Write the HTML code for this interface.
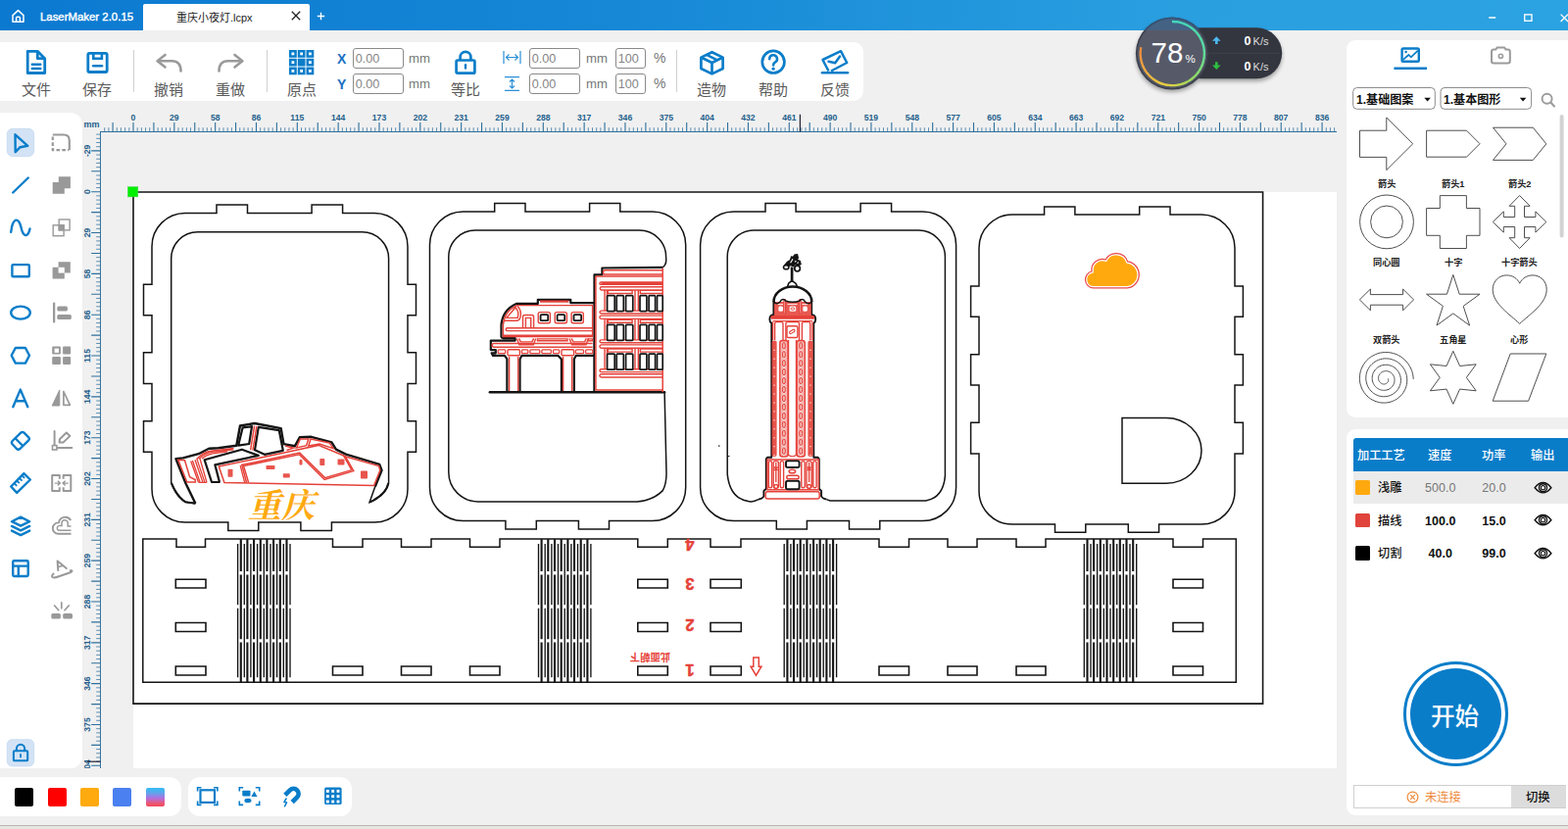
<!DOCTYPE html>
<html lang="zh"><head><meta charset="utf-8"><title>LaserMaker 2.0.15</title>
<style>
*{box-sizing:border-box;margin:0;padding:0}
html,body{width:1600px;height:846px;overflow:hidden}
body{position:relative;background:#f0f0f0;font-family:"Liberation Sans",sans-serif;font-size:12px;color:#333}
.a,.t{position:absolute}
svg{display:block;overflow:visible}
.t{pointer-events:none}
.t text,text.cj{font-family:"Liberation Sans","Noto Sans CJK SC",sans-serif}
#titlebar{left:0;top:0;width:1600px;height:31px;background:linear-gradient(90deg,#0b79d0 0%,#1688d6 40%,#2a9fe0 75%,#2ba2e1 100%)}
#tab{left:146px;top:4px;width:170px;height:27px;background:#fff;border-radius:2px 2px 0 0}
#toolbar{left:0;top:43px;width:881px;height:59.6px;background:#fff;border-radius:0 10px 10px 0}
.sep{width:1px;background:#d0d0d0;top:8px;height:43px}
.inp{border:1px solid #8a8a8a;border-radius:3px;background:#fff;color:#858585;font-size:12.6px;line-height:20.5px;padding-left:1.8px;height:21px}
.unit{color:#767676;font-size:13.2px;line-height:14px}
#left{left:0;top:115px;width:84px;height:669px;background:#fff;border-radius:0 12px 12px 0}
#canvas{left:103px;top:135px;width:1261px;height:649px;background:#f0f0f0;overflow:hidden}
#work{left:33px;top:61px;width:1228px;height:588px;background:#fff}
#rp1{left:1374px;top:41px;width:226px;height:385px;background:#fff;border-radius:9px 0 0 9px}
#rp2{left:1374px;top:438px;width:226px;height:394.3px;background:#fff;border-radius:9px 0 0 9px}
#colors{left:0;top:793px;width:185px;height:40px;background:#fff;border-radius:0 12px 12px 0}
#btools{left:192px;top:793px;width:167px;height:40px;background:#fff;border-radius:12px}
.sw{top:11px;width:19px;height:19px;border-radius:2px}
#taskstrip{left:0;top:842.4px;width:1600px;height:4px;background:#e7e5df;border-top:1.6px solid #b9b6b1}
.num{font-size:12.5px;line-height:15px;text-align:center;padding-top:1px}

</style></head>
<body>
<div id="titlebar" class="a"><svg class="a" style="left:11px;top:9px" width="15" height="15" viewBox="0 0 15 15" ><path d="M2 6.6 L7.5 1.6 L13 6.6 V13.2 H2 Z M5.6 13 V9.2 Q5.6 8.2 6.6 8.2 H8.4 Q9.4 8.2 9.4 9.2 V13" fill="none" stroke="#fff" stroke-width="1.5" stroke-linejoin="round"/></svg><div class="a" style="left:41px;top:10px;font-size:11.3px;font-weight:normal;-webkit-text-stroke:0.4px #fff;color:#fff;letter-spacing:0.05px;line-height:14px;white-space:nowrap">LaserMaker 2.0.15</div><div id="tab" class="a"><svg class="t" role="img" aria-label="重庆小夜灯.lcpx" style="left:34.00px;top:7.00px" width="80.09" height="14.30" ><title>重庆小夜灯.lcpx</title><text x="0" y="11" font-size="11" fill="#222">重庆小夜灯.lcpx</text></svg><svg class="a" style="left:151px;top:6.6px" width="10" height="10" viewBox="0 0 10 10" ><path d="M0.8 0.8 L9.2 9.2 M9.2 0.8 L0.8 9.2" stroke="#222" stroke-width="1.3" fill="none"/></svg></div><svg class="a" style="left:323px;top:11.8px" width="9" height="9" viewBox="0 0 9 9" ><path d="M4.5 0.8 V8.2 M0.8 4.5 H8.2" stroke="#fff" stroke-width="1.3" fill="none"/></svg><svg class="a" style="left:1518px;top:16px" width="10" height="4" viewBox="0 0 10 4" ><path d="M1.2 2 H8.2" stroke="#d4ecf9" stroke-width="1.9"/></svg><svg class="a" style="left:1554px;top:13px" width="11" height="10" viewBox="0 0 11 10" ><rect x="1.7" y="1.9" width="7.3" height="6.4" fill="none" stroke="#f4fbff" stroke-width="1.4"/></svg><svg class="a" style="left:1590px;top:12px" width="12" height="12" viewBox="0 0 12 12" ><path d="M2.6 2.6 L10 10 M10 2.6 L2.6 10" stroke="#fff" stroke-width="1.3" fill="none"/></svg></div>
<div id="toolbar" class="a"><svg class="a" style="left:25px;top:6px" width="24" height="29" viewBox="0 0 24 29" ><path d="M3.2 3.3 H13.3 L20.7 10.7 V25.5 H3.2 Z" fill="none" stroke="#0a7dc9" stroke-width="2.8" stroke-linejoin="round"/><path d="M13.3 3.3 V10.7 H20.7" fill="none" stroke="#0a7dc9" stroke-width="2.8" stroke-linejoin="round"/><path d="M7.8 16.8 H16.3 M7.8 20.9 H16.3" stroke="#0a7dc9" stroke-width="2.5" stroke-linecap="round"/></svg><svg class="t" role="img" aria-label="文件" style="left:21.80px;top:39.00px" width="31.00" height="19.50" ><title>文件</title><text x="0" y="15" font-size="15" fill="#5a5a5a">文件</text></svg><svg class="a" style="left:87px;top:8px" width="25" height="25" viewBox="0 0 25 25" ><rect x="2.8" y="3.3" width="19.4" height="19.2" rx="1.5" fill="none" stroke="#0a7dc9" stroke-width="2.8"/><path d="M8.3 3.3 V8.7 H16.9 V3.3" fill="none" stroke="#0a7dc9" stroke-width="2.6"/><path d="M8.2 16.3 H17" stroke="#0a7dc9" stroke-width="2.6" stroke-linecap="round"/></svg><svg class="t" role="img" aria-label="保存" style="left:84.30px;top:39.00px" width="31.00" height="19.50" ><title>保存</title><text x="0" y="15" font-size="15" fill="#5a5a5a">保存</text></svg><div class="a sep" style="left:136px"></div><svg class="a" style="left:158px;top:10px" width="30" height="23" viewBox="0 0 30 23" ><path d="M10.5 3 L2.6 9.2 L10.5 15.5" fill="none" stroke="#9a9a9a" stroke-width="2.6" stroke-linecap="round" stroke-linejoin="round"/><path d="M3.2 9.2 H17.5 Q26.5 9.2 26.5 19.5" fill="none" stroke="#9a9a9a" stroke-width="2.6" stroke-linecap="round"/></svg><svg class="t" role="img" aria-label="撤销" style="left:157.20px;top:39.00px" width="31.00" height="19.50" ><title>撤销</title><text x="0" y="15" font-size="15" fill="#5a5a5a">撤销</text></svg><svg class="a" style="left:219.5px;top:10px" width="30" height="23" viewBox="0 0 30 23" ><path d="M19.5 3 L27.4 9.2 L19.5 15.5" fill="none" stroke="#9a9a9a" stroke-width="2.6" stroke-linecap="round" stroke-linejoin="round"/><path d="M26.8 9.2 H12.5 Q3.5 9.2 3.5 19.5" fill="none" stroke="#9a9a9a" stroke-width="2.6" stroke-linecap="round"/></svg><svg class="t" role="img" aria-label="重做" style="left:220.00px;top:39.00px" width="31.00" height="19.50" ><title>重做</title><text x="0" y="15" font-size="15" fill="#5a5a5a">重做</text></svg><div class="a sep" style="left:272px"></div><svg class="a" style="left:295px;top:8px" width="26" height="26" viewBox="0 0 26 26" ><rect x="0.00" y="0.00" width="7.8" height="7.8" fill="#0a7dc9"/><rect x="2.50" y="2.50" width="2.8" height="2.8" fill="#fff"/><rect x="8.75" y="0.00" width="7.8" height="7.8" fill="#0a7dc9"/><rect x="11.25" y="2.50" width="2.8" height="2.8" fill="#fff"/><rect x="17.50" y="0.00" width="7.8" height="7.8" fill="#0a7dc9"/><rect x="20.00" y="2.50" width="2.8" height="2.8" fill="#fff"/><rect x="0.00" y="8.75" width="7.8" height="7.8" fill="#0a7dc9"/><rect x="2.50" y="11.25" width="2.8" height="2.8" fill="#fff"/><rect x="8.75" y="8.75" width="7.8" height="7.8" fill="#0a7dc9"/><rect x="17.50" y="8.75" width="7.8" height="7.8" fill="#0a7dc9"/><rect x="20.00" y="11.25" width="2.8" height="2.8" fill="#fff"/><rect x="0.00" y="17.50" width="7.8" height="7.8" fill="#0a7dc9"/><rect x="2.50" y="20.00" width="2.8" height="2.8" fill="#fff"/><rect x="8.75" y="17.50" width="7.8" height="7.8" fill="#0a7dc9"/><rect x="11.25" y="20.00" width="2.8" height="2.8" fill="#fff"/><rect x="17.50" y="17.50" width="7.8" height="7.8" fill="#0a7dc9"/><rect x="20.00" y="20.00" width="2.8" height="2.8" fill="#fff"/></svg><svg class="t" role="img" aria-label="原点" style="left:292.50px;top:39.00px" width="31.00" height="19.50" ><title>原点</title><text x="0" y="15" font-size="15" fill="#5a5a5a">原点</text></svg><div class="a" style="left:344px;top:10px;font-size:14px;font-weight:bold;color:#1a6fc4;line-height:14px">X</div><div class="a" style="left:344px;top:36px;font-size:14px;font-weight:bold;color:#1a6fc4;line-height:14px">Y</div><div class="a inp" style="left:360px;top:6px;width:52px">0.00</div><div class="a unit" style="left:417px;top:9.5px">mm</div><div class="a inp" style="left:360px;top:32px;width:52px">0.00</div><div class="a unit" style="left:417px;top:35.5px">mm</div><svg class="a" style="left:463px;top:8px" width="24" height="26" viewBox="0 0 24 26" ><rect x="2.6" y="10.5" width="18.8" height="13.2" rx="1.2" fill="none" stroke="#0a7dc9" stroke-width="2.7"/><path d="M6.6 10.5 V7.2 A5.4 5.4 0 0 1 17.4 7.2 V10.5" fill="none" stroke="#0a7dc9" stroke-width="2.7"/><path d="M12 15.3 V18.6" stroke="#0a7dc9" stroke-width="2.4" stroke-linecap="round"/></svg><svg class="t" role="img" aria-label="等比" style="left:460.00px;top:39.00px" width="31.00" height="19.50" ><title>等比</title><text x="0" y="15" font-size="15" fill="#5a5a5a">等比</text></svg><svg class="a" style="left:512.5px;top:9px" width="19" height="13" viewBox="0 0 19 13" ><path d="M1 0 V13 M18 0 V13 M3.5 6.5 H15.5 M6.5 3.5 L3.5 6.5 L6.5 9.5 M12.5 3.5 L15.5 6.5 L12.5 9.5" fill="none" stroke="#2a8fd6" stroke-width="1.2"/></svg><svg class="a" style="left:514.5px;top:35px" width="15" height="15" viewBox="0 0 15 15" ><path d="M0 0.7 H15 M0 14.3 H15 M7.5 3 V12 M5 5.5 L7.5 3 L10 5.5 M5 9.5 L7.5 12 L10 9.5" fill="none" stroke="#2a8fd6" stroke-width="1.2"/></svg><div class="a inp" style="left:540px;top:5.5px;width:52px">0.00</div><div class="a unit" style="left:598px;top:9.5px">mm</div><div class="a inp" style="left:540px;top:32px;width:52px">0.00</div><div class="a unit" style="left:598px;top:35.5px">mm</div><div class="a inp" style="left:628px;top:5.5px;width:31px">100</div><div class="a unit" style="left:667px;top:9px"><span style="font-size:14px">%</span></div><div class="a inp" style="left:628px;top:32px;width:31px">100</div><div class="a unit" style="left:667px;top:35px"><span style="font-size:14px">%</span></div><div class="a sep" style="left:690px"></div><svg class="a" style="left:712px;top:7px" width="29" height="28" viewBox="0 0 29 28" ><path d="M14.5 3.2 L25.6 8.6 V20 L14.5 25.4 L3.4 20 V8.6 Z" fill="none" stroke="#0a7dc9" stroke-width="2.7" stroke-linejoin="round"/><path d="M3.8 8.8 L14.5 14 L25.2 8.8 M14.5 14 V25" fill="none" stroke="#0a7dc9" stroke-width="2.7" stroke-linejoin="round"/><path d="M9 5.9 L20 11.3" fill="none" stroke="#0a7dc9" stroke-width="2.4"/></svg><svg class="t" role="img" aria-label="造物" style="left:711.00px;top:39.00px" width="31.00" height="19.50" ><title>造物</title><text x="0" y="15" font-size="15" fill="#5a5a5a">造物</text></svg><svg class="a" style="left:775px;top:6px" width="28" height="28" viewBox="0 0 28 28" ><circle cx="14.1" cy="14.2" r="11.3" fill="none" stroke="#0a7dc9" stroke-width="2.7"/><path d="M10.2 11.2 A3.9 3.9 0 1 1 15.8 14.6 Q14.1 15.6 14.1 17.6" fill="none" stroke="#0a7dc9" stroke-width="2.5" stroke-linecap="round"/><circle cx="14.1" cy="21.2" r="1.6" fill="#0a7dc9"/></svg><svg class="t" role="img" aria-label="帮助" style="left:773.80px;top:39.00px" width="31.00" height="19.50" ><title>帮助</title><text x="0" y="15" font-size="15" fill="#5a5a5a">帮助</text></svg><svg class="a" style="left:836px;top:6px" width="32" height="28" viewBox="0 0 32 28" ><path d="M9.5 23.5 L3.5 12 L22 3.2 L28.2 15 L12 23.5" fill="none" stroke="#0a7dc9" stroke-width="2.5" stroke-linejoin="round"/><path d="M9.5 13.8 L16.2 15.2 L21 8.5" fill="none" stroke="#0a7dc9" stroke-width="2.5" stroke-linecap="round" stroke-linejoin="round"/><path d="M3 25.3 H29" stroke="#0a7dc9" stroke-width="2.6" stroke-linecap="round"/></svg><svg class="t" role="img" aria-label="反馈" style="left:836.80px;top:39.00px" width="31.00" height="19.50" ><title>反馈</title><text x="0" y="15" font-size="15" fill="#5a5a5a">反馈</text></svg></div>
<div id="left" class="a"><svg class="a" style="left:0;top:0" width="84" height="669" viewBox="0 115 84 669"><rect x="7.3" y="131.3" width="27.3" height="28.2" rx="5.5" fill="#d3e3f5" stroke="#c3d8f0" stroke-width="0.8"/><path d="M15.5 137.3 L28.3 148.8 L20.6 150.2 L15.7 155.2 Z" fill="none" stroke="#0a7dc9" stroke-width="2.4" stroke-linecap="round" stroke-linejoin="round"/><path d="M53.8 137.5 H65 Q70.8 137.5 70.8 143.5 V153.2" fill="none" stroke="#999" stroke-width="2.2"/><path d="M53.8 139.5 V153.2 H70" fill="none" stroke="#999" stroke-width="2.2" stroke-dasharray="3.6 2.2"/><path d="M13.2 196.5 L28.8 181.5" fill="none" stroke="#0a7dc9" stroke-width="2.4" stroke-linecap="round" stroke-linejoin="round"/><path d="M59.8 180.2 H71.9 V192.2 H65.8 V197.8 H53.7 V186 H59.8 Z" fill="#999"/><path d="M11.2 236.8 C13 222 19 221 21.5 232 C23.5 241.5 28.5 243.5 30.5 233.5" fill="none" stroke="#0a7dc9" stroke-width="2.4" stroke-linecap="round" stroke-linejoin="round"/><rect x="60.2" y="224" width="10.9" height="10.9" fill="none" stroke="#999" stroke-width="1.4"/><rect x="54.2" y="229.8" width="10.9" height="10.9" fill="none" stroke="#999" stroke-width="1.4"/><rect x="59.6" y="229.2" width="6.2" height="6.3" fill="#999"/><rect x="12.4" y="270.1" width="17.4" height="12.2" rx="0.8" fill="none" stroke="#0a7dc9" stroke-width="2.4" stroke-linecap="round" stroke-linejoin="round"/><path d="M59.6 267.2 H71.8 V278.6 H65.8 V284.5 H53.6 V272.8 H59.6 Z" fill="#999"/><rect x="59.6" y="272.8" width="6.2" height="5.8" fill="#fff"/><ellipse cx="21" cy="319.1" rx="9.8" ry="6.5" fill="none" stroke="#0a7dc9" stroke-width="2.4" stroke-linecap="round" stroke-linejoin="round"/><rect x="54" y="308.4" width="2.3" height="21.2" rx="1" fill="#999"/><rect x="58.3" y="312.5" width="10.6" height="5" rx="1.5" fill="#999"/><rect x="58.3" y="321.1" width="14.5" height="5" rx="1.5" fill="#999"/><path d="M15.8 355 H25.9 L30 362.8 L25.9 370.6 H15.8 L11.7 362.8 Z" fill="none" stroke="#0a7dc9" stroke-width="2.4" stroke-linecap="round" stroke-linejoin="round"/><rect x="53.2" y="353.5" width="8.7" height="8.1" rx="1" fill="#999"/><rect x="64.1" y="353.5" width="8" height="8.1" rx="1" fill="#999"/><rect x="53.2" y="363.9" width="8.7" height="8" rx="1" fill="#999"/><rect x="64.1" y="363.9" width="8" height="8" rx="1" fill="#999"/><rect x="55.6" y="355.6" width="4.4" height="4.3" fill="#fff"/><path d="M13.3 415.2 L20.8 397.6 L28.3 415.2 M16.2 409.3 H25.4" fill="none" stroke="#0a7dc9" stroke-width="2.4" stroke-linecap="round" stroke-linejoin="round"/><path d="M60.8 397.9 V414 H53.2 Z" fill="#999" stroke="#999" stroke-width="1" stroke-linejoin="round"/><path d="M64.9 399.5 V413.3 H71.4 Z" fill="none" stroke="#999" stroke-width="1.7" stroke-linejoin="round"/><path d="M21.2 441.7 Q22.9 440.1 24.6 441.7 L29.2 446.3 Q30.6 447.8 29.2 449.3 L20.4 458 Q18.7 459.5 17 458 L12.6 453.3 Q11.2 451.5 12.6 450 Z M15.8 447.5 L23.3 455" fill="none" stroke="#0a7dc9" stroke-width="2.4" stroke-linecap="round" stroke-linejoin="round"/><path d="M55.6 440 V454 M58.6 456.9 H73.3" fill="none" stroke="#999" stroke-width="2" stroke-linecap="round" stroke-linejoin="round"/><rect x="53.5" y="454.6" width="4.4" height="4.4" fill="#fff" stroke="#999" stroke-width="1.6"/><path d="M60.6 451.6 L60.9 448.2 L67.8 441.5 L71.4 444.9 L64.4 451.6 Z" fill="none" stroke="#999" stroke-width="2" stroke-linecap="round" stroke-linejoin="round"/><path d="M24.4 483.2 L30.9 489.5 L17.2 502.8 L11.2 496.5 Z" fill="none" stroke="#0a7dc9" stroke-width="2.4" stroke-linecap="round" stroke-linejoin="round"/><path d="M14.5 493.2 l2.7 2.7 M17.1 490.5 l2.7 2.7 M19.8 487.9 l2.7 2.7 M22.4 485.2 l2.7 2.7" fill="none" stroke="#0a7dc9" stroke-width="1.9"/><path d="M60.8 488.8 V485.1 H53.2 V501 H60.8 V497.3 M64.7 488.8 V485.1 H72.3 V501 H64.7 V497.3" fill="none" stroke="#999" stroke-width="2" stroke-linejoin="round"/><path d="M55.8 493.1 H61 M58.9 490.7 L61.4 493.1 L58.9 495.6 M69.7 493.1 H64.5 M66.6 490.7 L64.1 493.1 L66.6 495.6" fill="none" stroke="#999" stroke-width="1.4" stroke-linejoin="round"/><path d="M21.1 527.6 L30.2 532.2 L21.1 536.6 L12 532.2 Z M12 536.9 L21.1 541.4 L30.2 536.9 M12 541.6 L21.1 546.1 L30.2 541.6" fill="none" stroke="#0a7dc9" stroke-width="2.4" stroke-linecap="round" stroke-linejoin="round"/><path d="M72.5 544.8 H59.5 A5.7 5.7 0 0 1 59.5 533.4 H60 A6.6 6.6 0 0 1 72.2 531" fill="none" stroke="#999" stroke-width="1.9"/><path d="M72.5 541.2 H60 A2.4 2.4 0 0 1 60 536.6 H63 V533.5 A3.2 3.2 0 0 1 69.2 533 V537 H72.5" fill="none" stroke="#999" stroke-width="1.5"/><rect x="13.2" y="572.3" width="15.5" height="15.7" rx="1.2" fill="none" stroke="#0a7dc9" stroke-width="2.4" stroke-linecap="round" stroke-linejoin="round"/><path d="M13.2 577.6 H28.7 M18.8 577.6 V588" fill="none" stroke="#0a7dc9" stroke-width="2.4" stroke-linecap="round" stroke-linejoin="round"/><path d="M59.3 582 L58.6 572.5 L67.8 580" fill="none" stroke="#999" stroke-width="2" stroke-linecap="round" stroke-linejoin="round"/><path d="M58.9 578.8 L64.3 577.3" fill="none" stroke="#999" stroke-width="1.6"/><path d="M54.6 585.6 Q51.5 588.5 54.5 589.4 Q56 589.8 60 588.3 L72.3 584 Q75 581.8 71.8 582.2" fill="none" stroke="#999" stroke-width="2" stroke-linecap="round" stroke-linejoin="round"/><rect x="52.3" y="625.9" width="9.6" height="5.6" rx="1.6" fill="#999"/><rect x="64.2" y="625.9" width="9.8" height="5.6" rx="1.6" fill="#999"/><path d="M62.8 614.9 V620.7 M55.6 618 L59.8 622.7 M70.2 618 L66 622.7" fill="none" stroke="#999" stroke-width="1.7" stroke-linecap="round"/><rect x="7.3" y="754.7" width="27.3" height="27.2" rx="5" fill="#d3e3f5" stroke="#c3d8f0" stroke-width="0.8"/><g transform="translate(11.9 758.3) scale(0.76)"><rect x="2.6" y="10.5" width="18.8" height="13.2" rx="1.2" fill="none" stroke="#0a7dc9" stroke-width="2.7"/><path d="M6.6 10.5 V7.2 A5.4 5.4 0 0 1 17.4 7.2 V10.5" fill="none" stroke="#0a7dc9" stroke-width="2.7"/><path d="M12 15.3 V18.6" stroke="#0a7dc9" stroke-width="2.4" stroke-linecap="round"/></g></svg></div>
<svg id="rulers" class="a" style="left:84px;top:110px" width="1281" height="675" viewBox="84 110 1281 675"><clipPath id="rclip"><rect x="84" y="110" width="1281" height="674"/></clipPath><g clip-path="url(#rclip)"><path d="M106.72 130.2V134.5M110.90 130.2V134.5M119.27 130.2V134.5M123.45 130.2V134.5M127.63 130.2V134.5M131.82 130.2V134.5M140.18 130.2V134.5M144.37 130.2V134.5M148.55 130.2V134.5M152.73 130.2V134.5M161.10 130.2V134.5M165.28 130.2V134.5M169.46 130.2V134.5M173.65 130.2V134.5M182.01 130.2V134.5M186.20 130.2V134.5M190.38 130.2V134.5M194.56 130.2V134.5M202.93 130.2V134.5M207.11 130.2V134.5M211.29 130.2V134.5M215.48 130.2V134.5M223.84 130.2V134.5M228.03 130.2V134.5M232.21 130.2V134.5M236.39 130.2V134.5M244.76 130.2V134.5M248.94 130.2V134.5M253.12 130.2V134.5M257.31 130.2V134.5M265.67 130.2V134.5M269.86 130.2V134.5M274.04 130.2V134.5M278.22 130.2V134.5M286.59 130.2V134.5M290.77 130.2V134.5M294.95 130.2V134.5M299.14 130.2V134.5M307.50 130.2V134.5M311.69 130.2V134.5M315.87 130.2V134.5M320.05 130.2V134.5M328.42 130.2V134.5M332.60 130.2V134.5M336.78 130.2V134.5M340.97 130.2V134.5M349.33 130.2V134.5M353.52 130.2V134.5M357.70 130.2V134.5M361.88 130.2V134.5M370.25 130.2V134.5M374.43 130.2V134.5M378.61 130.2V134.5M382.80 130.2V134.5M391.16 130.2V134.5M395.35 130.2V134.5M399.53 130.2V134.5M403.71 130.2V134.5M412.08 130.2V134.5M416.26 130.2V134.5M420.44 130.2V134.5M424.63 130.2V134.5M432.99 130.2V134.5M437.18 130.2V134.5M441.36 130.2V134.5M445.54 130.2V134.5M453.91 130.2V134.5M458.09 130.2V134.5M462.27 130.2V134.5M466.46 130.2V134.5M474.82 130.2V134.5M479.01 130.2V134.5M483.19 130.2V134.5M487.37 130.2V134.5M495.74 130.2V134.5M499.92 130.2V134.5M504.10 130.2V134.5M508.29 130.2V134.5M516.65 130.2V134.5M520.84 130.2V134.5M525.02 130.2V134.5M529.20 130.2V134.5M537.57 130.2V134.5M541.75 130.2V134.5M545.93 130.2V134.5M550.12 130.2V134.5M558.48 130.2V134.5M562.67 130.2V134.5M566.85 130.2V134.5M571.03 130.2V134.5M579.40 130.2V134.5M583.58 130.2V134.5M587.76 130.2V134.5M591.95 130.2V134.5M600.31 130.2V134.5M604.50 130.2V134.5M608.68 130.2V134.5M612.86 130.2V134.5M621.23 130.2V134.5M625.41 130.2V134.5M629.59 130.2V134.5M633.78 130.2V134.5M642.14 130.2V134.5M646.33 130.2V134.5M650.51 130.2V134.5M654.69 130.2V134.5M663.06 130.2V134.5M667.24 130.2V134.5M671.42 130.2V134.5M675.61 130.2V134.5M683.97 130.2V134.5M688.16 130.2V134.5M692.34 130.2V134.5M696.52 130.2V134.5M704.89 130.2V134.5M709.07 130.2V134.5M713.25 130.2V134.5M717.44 130.2V134.5M725.80 130.2V134.5M729.99 130.2V134.5M734.17 130.2V134.5M738.35 130.2V134.5M746.72 130.2V134.5M750.90 130.2V134.5M755.08 130.2V134.5M759.27 130.2V134.5M767.63 130.2V134.5M771.82 130.2V134.5M776.00 130.2V134.5M780.18 130.2V134.5M788.55 130.2V134.5M792.73 130.2V134.5M796.91 130.2V134.5M801.10 130.2V134.5M809.46 130.2V134.5M813.65 130.2V134.5M817.83 130.2V134.5M822.01 130.2V134.5M830.38 130.2V134.5M834.56 130.2V134.5M838.74 130.2V134.5M842.93 130.2V134.5M851.29 130.2V134.5M855.48 130.2V134.5M859.66 130.2V134.5M863.84 130.2V134.5M872.21 130.2V134.5M876.39 130.2V134.5M880.57 130.2V134.5M884.76 130.2V134.5M893.12 130.2V134.5M897.31 130.2V134.5M901.49 130.2V134.5M905.67 130.2V134.5M914.04 130.2V134.5M918.22 130.2V134.5M922.40 130.2V134.5M926.59 130.2V134.5M934.95 130.2V134.5M939.14 130.2V134.5M943.32 130.2V134.5M947.50 130.2V134.5M955.87 130.2V134.5M960.05 130.2V134.5M964.23 130.2V134.5M968.42 130.2V134.5M976.78 130.2V134.5M980.97 130.2V134.5M985.15 130.2V134.5M989.33 130.2V134.5M997.70 130.2V134.5M1001.88 130.2V134.5M1006.06 130.2V134.5M1010.25 130.2V134.5M1018.61 130.2V134.5M1022.80 130.2V134.5M1026.98 130.2V134.5M1031.16 130.2V134.5M1039.53 130.2V134.5M1043.71 130.2V134.5M1047.89 130.2V134.5M1052.08 130.2V134.5M1060.44 130.2V134.5M1064.63 130.2V134.5M1068.81 130.2V134.5M1072.99 130.2V134.5M1081.36 130.2V134.5M1085.54 130.2V134.5M1089.72 130.2V134.5M1093.91 130.2V134.5M1102.27 130.2V134.5M1106.46 130.2V134.5M1110.64 130.2V134.5M1114.82 130.2V134.5M1123.19 130.2V134.5M1127.37 130.2V134.5M1131.55 130.2V134.5M1135.74 130.2V134.5M1144.10 130.2V134.5M1148.29 130.2V134.5M1152.47 130.2V134.5M1156.65 130.2V134.5M1165.02 130.2V134.5M1169.20 130.2V134.5M1173.38 130.2V134.5M1177.57 130.2V134.5M1185.93 130.2V134.5M1190.12 130.2V134.5M1194.30 130.2V134.5M1198.48 130.2V134.5M1206.85 130.2V134.5M1211.03 130.2V134.5M1215.21 130.2V134.5M1219.40 130.2V134.5M1227.76 130.2V134.5M1231.95 130.2V134.5M1236.13 130.2V134.5M1240.31 130.2V134.5M1248.68 130.2V134.5M1252.86 130.2V134.5M1257.04 130.2V134.5M1261.23 130.2V134.5M1269.59 130.2V134.5M1273.78 130.2V134.5M1277.96 130.2V134.5M1282.14 130.2V134.5M1290.51 130.2V134.5M1294.69 130.2V134.5M1298.87 130.2V134.5M1303.06 130.2V134.5M1311.42 130.2V134.5M1315.61 130.2V134.5M1319.79 130.2V134.5M1323.97 130.2V134.5M1332.34 130.2V134.5M1336.52 130.2V134.5M1340.70 130.2V134.5M1344.89 130.2V134.5M1353.25 130.2V134.5M1357.44 130.2V134.5M1361.62 130.2V134.5" stroke="#2d6f9c" stroke-width="1" fill="none" opacity="0.75"/><path d="M115.09 125V134.5M136.00 125V134.5M156.91 125V134.5M177.83 125V134.5M198.75 125V134.5M219.66 125V134.5M240.57 125V134.5M261.49 125V134.5M282.40 125V134.5M303.32 125V134.5M324.24 125V134.5M345.15 125V134.5M366.06 125V134.5M386.98 125V134.5M407.89 125V134.5M428.81 125V134.5M449.73 125V134.5M470.64 125V134.5M491.55 125V134.5M512.47 125V134.5M533.38 125V134.5M554.30 125V134.5M575.21 125V134.5M596.13 125V134.5M617.04 125V134.5M637.96 125V134.5M658.88 125V134.5M679.79 125V134.5M700.71 125V134.5M721.62 125V134.5M742.53 125V134.5M763.45 125V134.5M784.37 125V134.5M805.28 125V134.5M826.19 125V134.5M847.11 125V134.5M868.02 125V134.5M888.94 125V134.5M909.85 125V134.5M930.77 125V134.5M951.68 125V134.5M972.60 125V134.5M993.51 125V134.5M1014.43 125V134.5M1035.34 125V134.5M1056.26 125V134.5M1077.17 125V134.5M1098.09 125V134.5M1119.00 125V134.5M1139.92 125V134.5M1160.84 125V134.5M1181.75 125V134.5M1202.66 125V134.5M1223.58 125V134.5M1244.49 125V134.5M1265.41 125V134.5M1286.33 125V134.5M1307.24 125V134.5M1328.15 125V134.5M1349.07 125V134.5" stroke="#2d6f9c" stroke-width="1.1" fill="none"/><path d="M102.6 134.5 H1364" stroke="#2d6f9c" stroke-width="1.1" fill="none"/><path d="M98.2 137.14H102.6M98.2 141.32H102.6M98.2 145.50H102.6M98.2 149.69H102.6M98.2 158.05H102.6M98.2 162.24H102.6M98.2 166.42H102.6M98.2 170.60H102.6M98.2 178.97H102.6M98.2 183.15H102.6M98.2 187.33H102.6M98.2 191.52H102.6M98.2 199.88H102.6M98.2 204.07H102.6M98.2 208.25H102.6M98.2 212.43H102.6M98.2 220.80H102.6M98.2 224.98H102.6M98.2 229.16H102.6M98.2 233.35H102.6M98.2 241.71H102.6M98.2 245.90H102.6M98.2 250.08H102.6M98.2 254.26H102.6M98.2 262.63H102.6M98.2 266.81H102.6M98.2 270.99H102.6M98.2 275.18H102.6M98.2 283.54H102.6M98.2 287.73H102.6M98.2 291.91H102.6M98.2 296.09H102.6M98.2 304.46H102.6M98.2 308.64H102.6M98.2 312.82H102.6M98.2 317.01H102.6M98.2 325.37H102.6M98.2 329.56H102.6M98.2 333.74H102.6M98.2 337.92H102.6M98.2 346.29H102.6M98.2 350.47H102.6M98.2 354.65H102.6M98.2 358.84H102.6M98.2 367.20H102.6M98.2 371.39H102.6M98.2 375.57H102.6M98.2 379.75H102.6M98.2 388.12H102.6M98.2 392.30H102.6M98.2 396.48H102.6M98.2 400.67H102.6M98.2 409.03H102.6M98.2 413.22H102.6M98.2 417.40H102.6M98.2 421.58H102.6M98.2 429.95H102.6M98.2 434.13H102.6M98.2 438.31H102.6M98.2 442.50H102.6M98.2 450.86H102.6M98.2 455.05H102.6M98.2 459.23H102.6M98.2 463.41H102.6M98.2 471.78H102.6M98.2 475.96H102.6M98.2 480.14H102.6M98.2 484.33H102.6M98.2 492.69H102.6M98.2 496.88H102.6M98.2 501.06H102.6M98.2 505.24H102.6M98.2 513.61H102.6M98.2 517.79H102.6M98.2 521.97H102.6M98.2 526.16H102.6M98.2 534.52H102.6M98.2 538.71H102.6M98.2 542.89H102.6M98.2 547.07H102.6M98.2 555.44H102.6M98.2 559.62H102.6M98.2 563.80H102.6M98.2 567.99H102.6M98.2 576.35H102.6M98.2 580.54H102.6M98.2 584.72H102.6M98.2 588.90H102.6M98.2 597.27H102.6M98.2 601.45H102.6M98.2 605.63H102.6M98.2 609.82H102.6M98.2 618.18H102.6M98.2 622.37H102.6M98.2 626.55H102.6M98.2 630.73H102.6M98.2 639.10H102.6M98.2 643.28H102.6M98.2 647.46H102.6M98.2 651.65H102.6M98.2 660.01H102.6M98.2 664.20H102.6M98.2 668.38H102.6M98.2 672.56H102.6M98.2 680.93H102.6M98.2 685.11H102.6M98.2 689.29H102.6M98.2 693.48H102.6M98.2 701.84H102.6M98.2 706.03H102.6M98.2 710.21H102.6M98.2 714.39H102.6M98.2 722.76H102.6M98.2 726.94H102.6M98.2 731.12H102.6M98.2 735.31H102.6M98.2 743.67H102.6M98.2 747.86H102.6M98.2 752.04H102.6M98.2 756.22H102.6M98.2 764.59H102.6M98.2 768.77H102.6M98.2 772.95H102.6M98.2 777.14H102.6" stroke="#2d6f9c" stroke-width="1" fill="none" opacity="0.75"/><path d="M93.2 153.87H102.6M93.2 174.78H102.6M93.2 195.70H102.6M93.2 216.61H102.6M93.2 237.53H102.6M93.2 258.44H102.6M93.2 279.36H102.6M93.2 300.27H102.6M93.2 321.19H102.6M93.2 342.11H102.6M93.2 363.02H102.6M93.2 383.93H102.6M93.2 404.85H102.6M93.2 425.76H102.6M93.2 446.68H102.6M93.2 467.59H102.6M93.2 488.51H102.6M93.2 509.43H102.6M93.2 530.34H102.6M93.2 551.25H102.6M93.2 572.17H102.6M93.2 593.09H102.6M93.2 614.00H102.6M93.2 634.91H102.6M93.2 655.83H102.6M93.2 676.74H102.6M93.2 697.66H102.6M93.2 718.58H102.6M93.2 739.49H102.6M93.2 760.40H102.6M93.2 781.32H102.6" stroke="#2d6f9c" stroke-width="1.1" fill="none"/><path d="M102.6 134 V784" stroke="#2d6f9c" stroke-width="1.1" fill="none"/><g font-family="Liberation Sans, sans-serif" font-size="8.6" font-weight="bold" fill="#245f8c"><text x="136.0" y="123.3" text-anchor="middle">0</text><text x="177.8" y="123.3" text-anchor="middle">29</text><text x="219.7" y="123.3" text-anchor="middle">58</text><text x="261.5" y="123.3" text-anchor="middle">86</text><text x="303.3" y="123.3" text-anchor="middle">115</text><text x="345.1" y="123.3" text-anchor="middle">144</text><text x="387.0" y="123.3" text-anchor="middle">173</text><text x="428.8" y="123.3" text-anchor="middle">202</text><text x="470.6" y="123.3" text-anchor="middle">231</text><text x="512.5" y="123.3" text-anchor="middle">259</text><text x="554.3" y="123.3" text-anchor="middle">288</text><text x="596.1" y="123.3" text-anchor="middle">317</text><text x="638.0" y="123.3" text-anchor="middle">346</text><text x="679.8" y="123.3" text-anchor="middle">375</text><text x="721.6" y="123.3" text-anchor="middle">404</text><text x="763.4" y="123.3" text-anchor="middle">432</text><text x="805.3" y="123.3" text-anchor="middle">461</text><text x="847.1" y="123.3" text-anchor="middle">490</text><text x="888.9" y="123.3" text-anchor="middle">519</text><text x="930.8" y="123.3" text-anchor="middle">548</text><text x="972.6" y="123.3" text-anchor="middle">577</text><text x="1014.4" y="123.3" text-anchor="middle">605</text><text x="1056.3" y="123.3" text-anchor="middle">634</text><text x="1098.1" y="123.3" text-anchor="middle">663</text><text x="1139.9" y="123.3" text-anchor="middle">692</text><text x="1181.8" y="123.3" text-anchor="middle">721</text><text x="1223.6" y="123.3" text-anchor="middle">750</text><text x="1265.4" y="123.3" text-anchor="middle">778</text><text x="1307.2" y="123.3" text-anchor="middle">807</text><text x="1349.1" y="123.3" text-anchor="middle">836</text><text transform="translate(92.3 153.9) rotate(-90)" text-anchor="middle">-29</text><text transform="translate(92.3 195.7) rotate(-90)" text-anchor="middle">0</text><text transform="translate(92.3 237.5) rotate(-90)" text-anchor="middle">29</text><text transform="translate(92.3 279.4) rotate(-90)" text-anchor="middle">58</text><text transform="translate(92.3 321.2) rotate(-90)" text-anchor="middle">86</text><text transform="translate(92.3 363.0) rotate(-90)" text-anchor="middle">115</text><text transform="translate(92.3 404.8) rotate(-90)" text-anchor="middle">144</text><text transform="translate(92.3 446.7) rotate(-90)" text-anchor="middle">173</text><text transform="translate(92.3 488.5) rotate(-90)" text-anchor="middle">202</text><text transform="translate(92.3 530.3) rotate(-90)" text-anchor="middle">231</text><text transform="translate(92.3 572.2) rotate(-90)" text-anchor="middle">259</text><text transform="translate(92.3 614.0) rotate(-90)" text-anchor="middle">288</text><text transform="translate(92.3 655.8) rotate(-90)" text-anchor="middle">317</text><text transform="translate(92.3 697.7) rotate(-90)" text-anchor="middle">346</text><text transform="translate(92.3 739.5) rotate(-90)" text-anchor="middle">375</text><text transform="translate(92.3 782.3) rotate(-90)" text-anchor="middle">404</text><text x="85.5" y="129.8" style="font-size:9px">mm</text></g><path d="M816.4 116.8 V134.5" stroke="#223" stroke-width="1.2"/><path d="M88.9 777.2 H102.6" stroke="#223" stroke-width="1.2"/></g></svg>
<div id="colors" class="a"><div class="a sw" style="left:15px;background:#000"></div><div class="a sw" style="left:48.5px;background:#ff0000"></div><div class="a sw" style="left:82px;background:#ffaa0e"></div><div class="a sw" style="left:115.3px;background:#4a80f0"></div><div class="a sw" style="left:149px;background:linear-gradient(180deg,#35bdf2 0%,#5aa8ee 25%,#b070e0 55%,#ee5570 85%,#f24a5a 100%)"></div></div>
<div id="btools" class="a"><svg class="a" style="left:0;top:0" width="167" height="40" viewBox="192 793 167 40"><rect x="204.5" y="806.3" width="14.5" height="12.6" fill="none" stroke="#0a7dc9" stroke-width="2.2"/><path d="M201.6 807.5 V803.7 H205.5 M218 803.7 H221.9 V807.5 M201.6 817.6 V821.4 H205.5 M218 821.4 H221.9 V817.6" fill="none" stroke="#0a7dc9" stroke-width="1.6"/><path d="M244.3 807.5 V803.7 H248.2 M260.8 803.7 H264.7 V807.5 M244.3 817.6 V821.4 H248.2 M260.8 821.4 H264.7 V817.6" fill="none" stroke="#0a7dc9" stroke-width="1.6"/><rect x="247.3" y="806.8" width="8.2" height="5.6" rx="0.8" fill="#0a7dc9"/><ellipse cx="253" cy="817" rx="3.6" ry="2.3" fill="#0a7dc9"/><path d="M259.5 807.5 L262.6 813 H256.4 Z" fill="#0a7dc9"/><path d="M290.9 811.4 L295.9 806.4 A5.1 5.1 0 0 1 303.1 806.4 A5.1 5.1 0 0 1 303.1 813.6 L298.2 818.5" fill="none" stroke="#0a7dc9" stroke-width="4.7"/><path d="M292 815 L289.9 818.6 L292.6 818.9 L290.5 822.8" fill="none" stroke="#0a7dc9" stroke-width="1.5" stroke-linejoin="round" stroke-linecap="round"/><rect x="331.1" y="803.6" width="17.5" height="17.5" rx="1.6" fill="#0a7dc9"/><rect x="332.90" y="805.90" width="2.9" height="2.9" fill="#fff"/><rect x="332.90" y="811.25" width="2.9" height="2.9" fill="#fff"/><rect x="332.90" y="816.60" width="2.9" height="2.9" fill="#fff"/><rect x="338.23" y="805.90" width="2.9" height="2.9" fill="#fff"/><rect x="338.23" y="811.25" width="2.9" height="2.9" fill="#fff"/><rect x="338.23" y="816.60" width="2.9" height="2.9" fill="#fff"/><rect x="343.56" y="805.90" width="2.9" height="2.9" fill="#fff"/><rect x="343.56" y="811.25" width="2.9" height="2.9" fill="#fff"/><rect x="343.56" y="816.60" width="2.9" height="2.9" fill="#fff"/></svg></div>
<div id="taskstrip" class="a"></div>
<div id="canvas" class="a"><div id="work" class="a"></div><svg class="a" style="left:0;top:0" width="1261" height="649" viewBox="103 135 1261 649" aria-label="design canvas"><path d="M136 196H1288.6V718.1H136Z" fill="none" stroke="#141414" stroke-width="1.6" /><path d="M189 217.4H221 V208.9 H252.5 V217.4H318.1 V208.9 H349.6 V217.4H382 A34 34 0 0 1 416 251.4V290.2 H424.5 V321.8 H416V359.7 H424.5 V391.4 H416V429.7 H424.5 V461.2 H416V499.1 A34 34 0 0 1 382 533.1H338.4 V541.6 H306.9 V533.1H263.8 V541.6 H232.8 V533.1H189 A34 34 0 0 1 155 499.1V461.2 H146.5 V429.7 H155V391.4 H146.5 V359.7 H155V321.8 H146.5 V290.2 H155V251.4 A34 34 0 0 1 189 217.4 Z" fill="none" stroke="#141414" stroke-width="1.5" /><path d="M472.5 216H504.7 V207.5 H536 V216H601.6 V207.5 H632.8 V216H665.7 A34 34 0 0 1 699.7 250V497.6 A34 34 0 0 1 665.7 531.6H621.5 V540.1 H590.4 V531.6H547.3 V540.1 H515.9 V531.6H472.5 A34 34 0 0 1 438.5 497.6V250 A34 34 0 0 1 472.5 216 Z" fill="none" stroke="#141414" stroke-width="1.5" /><path d="M748.6 216H781 V207.5 H812.1 V216H878.1 V207.5 H909.6 V216H941.6 A34 34 0 0 1 975.6 250V497.6 A34 34 0 0 1 941.6 531.6H897.8 V540.1 H866.5 V531.6H823.4 V540.1 H792.3 V531.6H748.6 A34 34 0 0 1 714.6 497.6V250 A34 34 0 0 1 748.6 216 Z" fill="none" stroke="#141414" stroke-width="1.5" /><path d="M1033 219.1H1065.6 V210.9 H1096.9 V219.1H1162.7 V210.9 H1194 V219.1H1226 A34 34 0 0 1 1260 253.1V292 H1268.4 V323.2 H1260V361.8 H1268.4 V393.1 H1260V431.3 H1268.4 V463.1 H1260V501.1 A34 34 0 0 1 1226 535.1H1182.6 V543.3 H1151.3 V535.1H1107.8 V543.3 H1076.5 V535.1H1033 A34 34 0 0 1 999 501.1V463.1 H990.6 V431.3 H999V393.1 H990.6 V361.8 H999V323.2 H990.6 V292 H999V253.1 A34 34 0 0 1 1033 219.1 Z" fill="none" stroke="#141414" stroke-width="1.5" /><path d="M199.4 513.7 L189 512.2 Q180 506 174.7 492.4 V264 A27 27 0 0 1 201.7 236.8 H369.6 A27 27 0 0 1 396.6 264 V492.4 Q394 505 377.1 512.6 L382.7 496.8" fill="none" stroke="#141414" stroke-width="1.5" /><path d="M382.7 496.8 L389.5 480 L387.2 473.8 L353 463.7 L342.9 458.7 L338.4 451.4 L317.6 445.8 L305.8 446.3 L300.8 455.3 L289.5 453.1 L286.7 437.1 L259.8 432 L245 434.5 L241.3 454.7 L222.8 457.2 L213.2 457.8 L202.6 463.2 L186.8 467.4 L179.5 468.2 L189.6 493.5 L199.4 513.7" fill="none" stroke="#141414" stroke-width="2.4" stroke-linejoin="round"/><path d="M174.9 493 Q180 506 189 512.2 L199.4 513.7 M396.4 493 Q394 505 377.1 512.6" fill="none" stroke="#141414" stroke-width="2.1" stroke-linejoin="round"/><path d="M247.6 436.4 L257 435.2 L254.2 453 L243.2 454.6 Z" fill="none" stroke="#141414" stroke-width="2.2" stroke-linejoin="round"/><path d="M263.8 435.8 L284.8 439.2 L288.8 459.8 L270 463.8 L260 459.2 Z" fill="none" stroke="#141414" stroke-width="2.2" stroke-linejoin="round"/><path d="M208.7 469.3 L246.9 458.7 L263.7 464.9 L219.4 474.4 L223.9 491.8 L216 492 Z" fill="none" stroke="#141414" stroke-width="2.2" stroke-linejoin="round"/><path d="M259.6 434.6 L255.6 459 M261.9 435 L257.9 459.6" fill="none" stroke="#e5423a" stroke-width="1.5" /><path d="M181.8 469.3 L188.5 469.7 L193.6 486.7 L199.2 489.5 L199.4 492.1 L190.8 492.1 Z" fill="none" stroke="#e5423a" stroke-width="1.5" /><path d="M194.7 470.5 L202.6 492.4 M196.4 470 L204.2 492.4 M199 469.3 L207 492.4 M201 468.6 L209 492.4 M204 468 L211 492.4 M203 492.4 H211" fill="none" stroke="#e5423a" stroke-width="1.35" /><path d="M200.5 468.8 Q207 461.5 215 460.2 L238.5 457.5 M203 468.3 Q209 462.5 216 461.4 L238.5 458.8 M206 468 Q211 463.8 217 462.8 L232 460.8" fill="none" stroke="#e5423a" stroke-width="1.35" /><path d="M223.3 476.1 L290 462 L324.9 454.4 L349 464.3 L353 466 L386.6 475.5 L387.8 480 L381.6 495.5 L228.9 492.4 Z" fill="none" stroke="#e5423a" stroke-width="1.5" /><path d="M253.6 492.4 L248.6 475.5 L305.3 463.7 L331.1 489.5 L360.8 480.6 L352 465" fill="none" stroke="#e5423a" stroke-width="1.5" /><path d="M251.6 492.8 L246.8 474.4 L305.8 462.1 L331.6 487.6 L358.9 479.6 L350.4 464.6" fill="none" stroke="#e5423a" stroke-width="1.5" /><path d="M249.8 492.8 L245.2 475" fill="none" stroke="#e5423a" stroke-width="1.35" /><path d="M302.5 457 L306.4 448 L314.8 448 L312.6 454.7 Z M317 448 L336.1 451.9 L340.1 457.6 L326 453.1 L314.8 455.1 Z M291 455 L299.5 457.2 L292.5 459.5" fill="none" stroke="#e5423a" stroke-width="1.5" /><rect x="232.5" y="478.8" width="5" height="8" rx="0.8" fill="#e5423a" opacity="0.9"/><rect x="271.5" y="474.9" width="9" height="4.2" rx="0.8" fill="#e5423a" opacity="0.9"/><rect x="288.8" y="483.3" width="7" height="4.2" rx="0.8" fill="#e5423a" opacity="0.9"/><rect x="305.5" y="469" width="3" height="5.5" rx="0.8" fill="#e5423a" opacity="0.9"/><rect x="326.3" y="468" width="5" height="7" rx="0.8" fill="#e5423a" opacity="0.9"/><rect x="344.5" y="468.6" width="7" height="6" rx="0.8" fill="#e5423a" opacity="0.9"/><rect x="368" y="480.5" width="7" height="8" rx="0.8" fill="#e5423a" opacity="0.9"/><path d="M676.3 272.8 Q680.5 270 679.6 263 V262 A27 27 0 0 0 652.6 235 H484.8 A27 27 0 0 0 457.8 262 V482 A30 30 0 0 0 487.8 511.9 H650 Q666 511 676.3 500.6 Q680.3 493 680 481.9 L678.1 400.3" fill="none" stroke="#141414" stroke-width="1.5" /><path d="M676.3 272.8 L614.4 273.5 V280.3 H606.5 V309.1 H582.3 V305.8 H548.8 V309.9 H526.9 Q513 316 511.5 331.4 V343.8 Q511.8 345.1 513.5 345.1 H525.6 V347.6 H500.8 V357.1 H505.8 V360.3 H501.6 L503 362.9 H514.9 L517.4 366.4 V400 M530.5 400 V366.4 L532.4 362.9 H569.5 L572.9 366.4 V400 M585.8 400 V366.4 L587.7 362.9 H606" fill="none" stroke="#141414" stroke-width="2.2" stroke-linejoin="round"/><path d="M499.8 400.3 H678.1" fill="none" stroke="#141414" stroke-width="2.4" stroke-linecap="round"/><path d="M606.3 309 V400" fill="none" stroke="#141414" stroke-width="2" /><path d="M676.2 273.5 V400" fill="none" stroke="#e5423a" stroke-width="1.5" /><path d="M607.9 282 H676 M607.9 282 V398 H676" fill="none" stroke="#e5423a" stroke-width="1.5" /><path d="M613.5 289.15 H676" fill="none" stroke="#e5423a" stroke-width="2.4" /><path d="M676 275.8 H617.6 A2.1 2.1 0 0 0 617.6 280 H676M676 287.9 H613.2 A1.2 1.2 0 0 0 613.2 290.4 H676M676 292.7 H613.6 A1.7 1.7 0 0 0 613.6 296 H676M676 317.1 H613.5 A1.4 1.4 0 0 0 613.5 320 H676M676 322.1 H613.6 A1.6 1.6 0 0 0 613.6 325.4 H676M620.3 296.4 H645.1 V299.5 H620.3 Z M676 296.4 H653.3 V299.5 H676M648 296 V317.5 M651.3 296 V317.5 M617 296 V317.5 M619.4 296 V317.5M676 346.9 H613.5 A1.4 1.4 0 0 0 613.5 349.8 H676M676 351.9 H613.6 A1.6 1.6 0 0 0 613.6 355.2 H676M620.3 326.2 H645.1 V329.3 H620.3 Z M676 326.2 H653.3 V329.3 H676M648 325.8 V347.3 M651.3 325.8 V347.3 M617 325.8 V347.3 M619.4 325.8 V347.3M676 376.7 H613.5 A1.4 1.4 0 0 0 613.5 379.6 H676M676 381.7 H613.6 A1.6 1.6 0 0 0 613.6 385 H676M620.3 356 H645.1 V359.1 H620.3 Z M676 356 H653.3 V359.1 H676M648 355.6 V377.1 M651.3 355.6 V377.1 M617 355.6 V377.1 M619.4 355.6 V377.1" fill="none" stroke="#e5423a" stroke-width="1.425" /><rect x="619.6" y="301.6" width="7.6" height="16" rx="0.8" fill="#fff" stroke="#141414" stroke-width="1.7"/><rect x="629.2" y="301.6" width="7.1" height="16" rx="0.8" fill="#fff" stroke="#141414" stroke-width="1.7"/><rect x="638.6" y="301.6" width="7.2" height="16" rx="0.8" fill="#fff" stroke="#141414" stroke-width="1.7"/><rect x="653" y="301.6" width="6.9" height="16" rx="0.8" fill="#fff" stroke="#141414" stroke-width="1.7"/><rect x="662.1" y="301.6" width="6.5" height="16" rx="0.8" fill="#fff" stroke="#141414" stroke-width="1.7"/><rect x="670.5" y="301.6" width="5.7" height="16" rx="0.8" fill="#fff" stroke="#141414" stroke-width="1.7"/><rect x="619.6" y="331.4" width="7.6" height="16" rx="0.8" fill="#fff" stroke="#141414" stroke-width="1.7"/><rect x="629.2" y="331.4" width="7.1" height="16" rx="0.8" fill="#fff" stroke="#141414" stroke-width="1.7"/><rect x="638.6" y="331.4" width="7.2" height="16" rx="0.8" fill="#fff" stroke="#141414" stroke-width="1.7"/><rect x="653" y="331.4" width="6.9" height="16" rx="0.8" fill="#fff" stroke="#141414" stroke-width="1.7"/><rect x="662.1" y="331.4" width="6.5" height="16" rx="0.8" fill="#fff" stroke="#141414" stroke-width="1.7"/><rect x="670.5" y="331.4" width="5.7" height="16" rx="0.8" fill="#fff" stroke="#141414" stroke-width="1.7"/><rect x="619.6" y="361.2" width="7.6" height="16" rx="0.8" fill="#fff" stroke="#141414" stroke-width="1.7"/><rect x="629.2" y="361.2" width="7.1" height="16" rx="0.8" fill="#fff" stroke="#141414" stroke-width="1.7"/><rect x="638.6" y="361.2" width="7.2" height="16" rx="0.8" fill="#fff" stroke="#141414" stroke-width="1.7"/><rect x="653" y="361.2" width="6.9" height="16" rx="0.8" fill="#fff" stroke="#141414" stroke-width="1.7"/><rect x="662.1" y="361.2" width="6.5" height="16" rx="0.8" fill="#fff" stroke="#141414" stroke-width="1.7"/><rect x="670.5" y="361.2" width="5.7" height="16" rx="0.8" fill="#fff" stroke="#141414" stroke-width="1.7"/><path d="M513.4 343.5 V331.6 Q514.6 317.5 527.6 311.6 H604.6 V343.5 Z" fill="none" stroke="#e5423a" stroke-width="1.425" /><path d="M551 307.6 H580.4" fill="none" stroke="#e5423a" stroke-width="2.25" /><path d="M516.9 324.4 L526 313.7 Q530.2 318.5 528.1 324.4 Z M514.9 327.3 H527.6 Q531.4 326.5 531.4 320 Q531 315 528 312.5" fill="none" stroke="#e5423a" stroke-width="1.425" /><path d="M533.5 335 V323.5 Q533.5 321.5 535.5 321.5 H542.6 Q544.6 321.5 544.6 323.5 V335 M536.4 335 V324.4 H541.7 V335" fill="none" stroke="#e5423a" stroke-width="1.425" /><rect x="549.2" y="318.6" width="12.2" height="11.2" rx="1.8" fill="none" stroke="#e5423a" stroke-width="1.4"/><rect x="551.6" y="321.2" width="7.6" height="6" rx="1" fill="#fff" stroke="#141414" stroke-width="1.8"/><rect x="566.2" y="318.6" width="12.2" height="11.2" rx="1.8" fill="none" stroke="#e5423a" stroke-width="1.4"/><rect x="568.6" y="321.2" width="7.6" height="6" rx="1" fill="#fff" stroke="#141414" stroke-width="1.8"/><rect x="583.1" y="318.6" width="12.2" height="11.2" rx="1.8" fill="none" stroke="#e5423a" stroke-width="1.4"/><rect x="585.5" y="321.2" width="7.6" height="6" rx="1" fill="#fff" stroke="#141414" stroke-width="1.8"/><path d="M604.6 334.8 H517.6 A1.4 1.4 0 0 0 517.6 337.6 H604.6 M513.4 342.2 H604.6" fill="none" stroke="#e5423a" stroke-width="1.425" /><path d="M527.3 345.4 L529.9 351.7 H544.3 L546.7 345.4 M529.5 345.4 L531.3 348.9 H542.9 L544.6 345.4" fill="none" stroke="#e5423a" stroke-width="1.425" /><path d="M581 345.4 L583.6 351.7 H598 L600.4 345.4 M583.2 345.4 L585 348.9 H596.6 L598.3 345.4" fill="none" stroke="#e5423a" stroke-width="1.425" /><path d="M548.4 345.9 H579 V347.7 H548.4 Z M600 345.9 H604.6 V347.7 H600 Z" fill="none" stroke="#e5423a" stroke-width="1.35" /><path d="M604.6 350.5 H504 A1.85 1.85 0 0 0 504 354.2 H604.6" fill="none" stroke="#e5423a" stroke-width="1.425" /><rect x="508.2" y="356.8" width="7.5" height="3.9" rx="1" fill="none" stroke="#e5423a" stroke-width="1.3"/><rect x="532.4" y="356.8" width="6.4" height="3.9" rx="1" fill="none" stroke="#e5423a" stroke-width="1.3"/><rect x="540.9" y="356.8" width="9.9" height="3.9" rx="1" fill="none" stroke="#e5423a" stroke-width="1.3"/><rect x="552.9" y="356.8" width="9.5" height="3.9" rx="1" fill="none" stroke="#e5423a" stroke-width="1.3"/><rect x="564.5" y="356.8" width="6.2" height="3.9" rx="1" fill="none" stroke="#e5423a" stroke-width="1.3"/><rect x="587.4" y="356.8" width="8.1" height="3.9" rx="1" fill="none" stroke="#e5423a" stroke-width="1.3"/><rect x="597.6" y="356.8" width="7.2" height="3.9" rx="1" fill="none" stroke="#e5423a" stroke-width="1.3"/><rect x="518" y="356.8" width="12.4" height="6" rx="1.2" fill="#fff" stroke="#e5423a" stroke-width="1.4"/><rect x="573" y="356.8" width="12.6" height="6" rx="1.2" fill="#fff" stroke="#e5423a" stroke-width="1.4"/><path d="M519.6 364 V399 M528.7 364 V399 M574.6 364 V399 M583.7 364 V399" fill="none" stroke="#e5423a" stroke-width="1.425" /><path d="M774 509.6 Q770 511.8 766.6 511.9 Q745 510.5 742.2 483.8 V262 A27 27 0 0 1 769.2 235 H937.4 A27 27 0 0 1 964.4 262 V485.6 Q962.5 508 944.7 510.9 H847 L843.4 509.6" fill="none" stroke="#141414" stroke-width="1.5" /><path d="M774 509.6 Q778.5 508.6 779.4 506.5 V501 L781.8 498.8 V468.3 L783 466.8 H787.3 V329.8 Q785 328.5 785.5 325.2 Q785.3 322.2 789.4 321 V307.5" fill="none" stroke="#141414" stroke-width="1.9" stroke-linejoin="round"/><path d="M843.4 509.6 Q839 508.6 838.1 506.5 V501 L835.8 498.8 V468.3 L834.6 466.8 H830.3 V329.8 Q832.6 328.5 832.1 325.2 Q832.3 322.2 828.2 321 V307.5" fill="none" stroke="#141414" stroke-width="1.9" stroke-linejoin="round"/><path d="M789.5 308 A19.4 15.6 0 0 1 828.3 308" fill="none" stroke="#141414" stroke-width="2.5" /><path d="M803.4 293 L804.7 289.2 L807.2 287.2 H809 L811.9 289.2 L813.8 293" fill="none" stroke="#141414" stroke-width="1.6" stroke-linejoin="round"/><path d="M808.1 287.2 V272.5" fill="none" stroke="#141414" stroke-width="2.7" /><path d="M800.6 270.6 L803.5 267.2 L806.4 265.5 L807.6 261.8 L809.4 262.6 L810.6 260.2 L813.6 259.6 L814.4 263.2 L813.3 265.2 L816.3 266.2 L817.2 269.6 L814.6 270.8 L811.6 269.6 L809.8 271.6 L806.5 270.6 L803.4 272.4 Z" fill="#141414" stroke="#141414" stroke-width="1.2" stroke-linejoin="round"/><ellipse cx="802.2" cy="272.8" rx="2.7" ry="2" fill="#fff" stroke="#141414" stroke-width="1.6"/><circle cx="813.6" cy="274" r="2.8" fill="#fff" stroke="#141414" stroke-width="1.7"/><path d="M806.6 268.2 L809 264.4 M811 267.2 L812.4 266.2 M813.4 268.4 L815 267.8" stroke="#fff" stroke-width="1.1" fill="none"/><rect x="789.9" y="308" width="37.9" height="14" fill="#e5423a" opacity="0.88"/><rect x="794.4" y="312.4" width="4.6" height="5.4" rx="1.6" fill="#fff"/><rect x="805.6" y="312.4" width="6.6" height="5.4" rx="1.6" fill="#fff"/><rect x="819.3" y="312.4" width="4.5" height="5.4" rx="1.6" fill="#fff"/><rect x="807" y="314" width="3.8" height="2.2" rx="1.1" fill="none" stroke="#e5423a" stroke-width="0.9"/><rect x="799.9" y="305.6" width="1.6" height="14.6" rx="0.8" fill="#fff" stroke="#e5423a" stroke-width="1.2"/><rect x="815.6" y="305.6" width="1.6" height="14.6" rx="0.8" fill="#fff" stroke="#e5423a" stroke-width="1.2"/><path d="M793.5 310.6 H799 M803.5 310.6 H813.5 M818.5 310.6 H824.5" fill="none" stroke="#fff" stroke-width="0.9" /><path d="M789.5 308 Q792.5 311.5 796 308 Q797 305.5 799 305.5 Q801 305.5 801.5 307 Q808.8 309.5 816 307 Q816.5 305.5 818.5 305.5 Q820.5 305.5 821.5 308 Q825 311.5 828.3 308" fill="none" stroke="#141414" stroke-width="1.5" /><rect x="786.4" y="322" width="44.8" height="3.8" rx="1.6" fill="#e5423a"/><path d="M788.5 327.6 H829" fill="none" stroke="#e5423a" stroke-width="1.2" /><path d="M790.6 347 V330.5 Q790.6 328.6 792.2 328.6 H797.4 Q799 328.6 799 330.5 V347" fill="none" stroke="#e5423a" stroke-width="1.4"/><path d="M801.9 347 V330.5 Q801.9 328.6 803.5 328.6 H813.9 Q815.5 328.6 815.5 330.5 V347" fill="none" stroke="#e5423a" stroke-width="1.4"/><path d="M818.4 347 V330.5 Q818.4 328.6 820 328.6 H825.2 Q826.8 328.6 826.8 330.5 V347" fill="none" stroke="#e5423a" stroke-width="1.4"/><path d="M788.6 328.5 V347 M829 328.5 V347" fill="none" stroke="#e5423a" stroke-width="1.35" /><rect x="802.9" y="332.8" width="11" height="11.8" rx="1.6" fill="#fff" stroke="#e5423a" stroke-width="1.5"/><rect x="805.3" y="337.2" width="6" height="2.4" rx="1.2" transform="rotate(-32 808.3 338.4)" fill="none" stroke="#e5423a" stroke-width="1.1"/><rect x="787.6" y="347.5" width="5" height="118.5" rx="2" fill="#e5423a" opacity="0.92"/><rect x="824.4" y="347.5" width="5.2" height="118.5" rx="2" fill="#e5423a" opacity="0.92"/><rect x="795.8" y="347.5" width="8.2" height="118.5" rx="2.5" fill="#e5423a" fill-opacity="0.38" stroke="#e5423a" stroke-width="1.4"/><rect x="813.1" y="347.5" width="8.2" height="118.5" rx="2.5" fill="#e5423a" fill-opacity="0.38" stroke="#e5423a" stroke-width="1.4"/><g fill="none" stroke="#e5423a" stroke-width="1"><ellipse cx="799.9" cy="352.8" rx="1.5" ry="3.3"/><ellipse cx="817.2" cy="352.8" rx="1.5" ry="3.3"/><ellipse cx="799.9" cy="361.8" rx="1.5" ry="3.3"/><ellipse cx="817.2" cy="361.8" rx="1.5" ry="3.3"/><ellipse cx="799.9" cy="370.7" rx="1.5" ry="3.3"/><ellipse cx="817.2" cy="370.7" rx="1.5" ry="3.3"/><ellipse cx="799.9" cy="379.6" rx="1.5" ry="3.3"/><ellipse cx="817.2" cy="379.6" rx="1.5" ry="3.3"/><ellipse cx="799.9" cy="388.6" rx="1.5" ry="3.3"/><ellipse cx="817.2" cy="388.6" rx="1.5" ry="3.3"/><ellipse cx="799.9" cy="397.5" rx="1.5" ry="3.3"/><ellipse cx="817.2" cy="397.5" rx="1.5" ry="3.3"/><ellipse cx="799.9" cy="406.5" rx="1.5" ry="3.3"/><ellipse cx="817.2" cy="406.5" rx="1.5" ry="3.3"/><ellipse cx="799.9" cy="415.4" rx="1.5" ry="3.3"/><ellipse cx="817.2" cy="415.4" rx="1.5" ry="3.3"/><ellipse cx="799.9" cy="424.4" rx="1.5" ry="3.3"/><ellipse cx="817.2" cy="424.4" rx="1.5" ry="3.3"/><ellipse cx="799.9" cy="433.3" rx="1.5" ry="3.3"/><ellipse cx="817.2" cy="433.3" rx="1.5" ry="3.3"/><ellipse cx="799.9" cy="442.3" rx="1.5" ry="3.3"/><ellipse cx="817.2" cy="442.3" rx="1.5" ry="3.3"/><ellipse cx="799.9" cy="451.2" rx="1.5" ry="3.3"/><ellipse cx="817.2" cy="451.2" rx="1.5" ry="3.3"/><ellipse cx="799.9" cy="460.2" rx="1.5" ry="3.3"/><ellipse cx="817.2" cy="460.2" rx="1.5" ry="3.3"/></g><path d="M799.1 357.3 h1.6M816.4 357.3 h1.6M789.4 357.3 h1.4M826.3 357.3 h1.4M799.1 366.2 h1.6M816.4 366.2 h1.6M789.4 366.2 h1.4M826.3 366.2 h1.4M799.1 375.2 h1.6M816.4 375.2 h1.6M789.4 375.2 h1.4M826.3 375.2 h1.4M799.1 384.1 h1.6M816.4 384.1 h1.6M789.4 384.1 h1.4M826.3 384.1 h1.4M799.1 393.1 h1.6M816.4 393.1 h1.6M789.4 393.1 h1.4M826.3 393.1 h1.4M799.1 402.0 h1.6M816.4 402.0 h1.6M789.4 402.0 h1.4M826.3 402.0 h1.4M799.1 411.0 h1.6M816.4 411.0 h1.6M789.4 411.0 h1.4M826.3 411.0 h1.4M799.1 419.9 h1.6M816.4 419.9 h1.6M789.4 419.9 h1.4M826.3 419.9 h1.4M799.1 428.9 h1.6M816.4 428.9 h1.6M789.4 428.9 h1.4M826.3 428.9 h1.4M799.1 437.8 h1.6M816.4 437.8 h1.6M789.4 437.8 h1.4M826.3 437.8 h1.4M799.1 446.8 h1.6M816.4 446.8 h1.6M789.4 446.8 h1.4M826.3 446.8 h1.4M799.1 455.7 h1.6M816.4 455.7 h1.6M789.4 455.7 h1.4M826.3 455.7 h1.4M799.1 464.7 h1.6M816.4 464.7 h1.6M789.4 464.7 h1.4M826.3 464.7 h1.4" fill="none" stroke="#fff" stroke-width="0.9" /><path d="M804.6 347 V464.5 Q808.5 467 812.4 464.5 V347" fill="none" stroke="#e5423a" stroke-width="1.2" /><rect x="783" y="469" width="52.2" height="30.8" fill="#fff" stroke="#e5423a" stroke-width="1.5"/><rect x="784.3" y="470.6" width="3.3" height="27.2" rx="1.5" fill="#fff" stroke="#e5423a" stroke-width="1.4"/><rect x="796.2" y="470.6" width="3.4" height="27.2" rx="1.5" fill="#fff" stroke="#e5423a" stroke-width="1.4"/><rect x="817.8" y="470.6" width="3.4" height="27.2" rx="1.5" fill="#fff" stroke="#e5423a" stroke-width="1.4"/><rect x="829.8" y="470.6" width="3.3" height="27.2" rx="1.5" fill="#fff" stroke="#e5423a" stroke-width="1.4"/><rect x="789.2" y="470.6" width="5.2" height="27.2" rx="1.8" fill="#fff" stroke="#e5423a" stroke-width="1.4"/><path d="M791.8 472 V492 M790 476.5 L793.6 480 M793.6 476.5 L790 480" fill="none" stroke="#e5423a" stroke-width="1.35" /><circle cx="791.8" cy="496.4" r="1.9" fill="#fff" stroke="#e5423a" stroke-width="1.4"/><rect x="823" y="470.6" width="5.2" height="27.2" rx="1.8" fill="#fff" stroke="#e5423a" stroke-width="1.4"/><path d="M825.6 472 V492 M823.8 476.5 L827.4 480 M827.4 476.5 L823.8 480" fill="none" stroke="#e5423a" stroke-width="1.35" /><circle cx="825.6" cy="496.4" r="1.9" fill="#fff" stroke="#e5423a" stroke-width="1.4"/><rect x="802" y="470.4" width="13.6" height="6.6" rx="1.8" fill="#fff" stroke="#141414" stroke-width="1.9"/><rect x="802" y="490.8" width="13.6" height="8.4" rx="1.8" fill="#fff" stroke="#141414" stroke-width="1.9"/><ellipse cx="808.4" cy="481" rx="3.3" ry="1.8" fill="#fff" stroke="#e5423a" stroke-width="1.5"/><rect x="802.8" y="485.2" width="12.4" height="3.6" rx="1.8" fill="#fff" stroke="#e5423a" stroke-width="1.5"/><rect x="781.2" y="501.7" width="55" height="7.3" rx="2" fill="#fff" stroke="#e5423a" stroke-width="1.5"/><circle cx="733.8" cy="455.1" r="0.8" fill="#141414"/><path d="M742.5 465.6 h2" stroke="#141414" stroke-width="1"/><path d="M1115.3 293.9 A8.6 8.6 0 0 1 1114 277 A11 11 0 0 1 1128.2 265 A12.3 12.3 0 0 1 1150.6 266.9 A13.62 13.62 0 0 1 1150.3 293.9 Z" fill="#ffa90f"/><path d="M1115.3 293.9 A8.6 8.6 0 0 1 1114 277 A11 11 0 0 1 1128.2 265 A12.3 12.3 0 0 1 1150.6 266.9 A13.62 13.62 0 0 1 1150.3 293.9 Z" fill="none" stroke="#fff" stroke-width="3.6"/><path d="M1115.3 293.9 A8.6 8.6 0 0 1 1114 277 A11 11 0 0 1 1128.2 265 A12.3 12.3 0 0 1 1150.6 266.9 A13.62 13.62 0 0 1 1150.3 293.9 Z" fill="none" stroke="#e8484a" stroke-width="1.25"/><path d="M1145 426.4 H1190 A36 33.45 0 0 1 1190 493.3 H1145 Z" fill="none" stroke="#141414" stroke-width="1.5" /><path d="M145.8 550H180V558.3H209.5V550H339.5V558.3H370V550H409.5V558.3H440V550H479.5V558.3H510V550H650.8V558.3H681.3V550H725V558.3H756V550H897V558.3H927.5V550H967V558.3H997V550H1037V558.3H1067V550H1197V558.3H1227.5V550H1261.3V696.3H145.8Z" fill="none" stroke="#141414" stroke-width="1.5" /><path d="M179.3 591.3H210V600H179.3ZM179.3 635.5H210V644.5H179.3ZM179.3 680H210V689H179.3ZM650.8 591.3H681.3V600H650.8ZM650.8 635.5H681.3V644.5H650.8ZM650.8 680H681.3V689H650.8ZM725 591.3H756.3V600H725ZM725 635.5H756.3V644.5H725ZM725 680H756.3V689H725ZM1197 591.3H1227.5V600H1197ZM1197 635.5H1227.5V644.5H1197ZM1197 680H1227.5V689H1197ZM339.5 680H370V689H339.5ZM409.5 680H440V689H409.5ZM479.5 680H510V689H479.5ZM897 680H927.5V689H897ZM967 680H997V689H967ZM1037 680H1067V689H1037Z" fill="none" stroke="#141414" stroke-width="1.6" /><path d="M242.6 555V617.3M242.6 620.8V691.3M249.3 555V617.3M249.3 620.8V691.3M255.9 555V617.3M255.9 620.8V691.3M262.6 555V617.3M262.6 620.8V691.3M269.3 555V617.3M269.3 620.8V691.3M276 555V617.3M276 620.8V691.3M282.6 555V617.3M282.6 620.8V691.3M289.3 555V617.3M289.3 620.8V691.3M296 555V617.3M296 620.8V691.3M549.5 555V617.3M549.5 620.8V691.3M556.2 555V617.3M556.2 620.8V691.3M562.9 555V617.3M562.9 620.8V691.3M569.5 555V617.3M569.5 620.8V691.3M576.2 555V617.3M576.2 620.8V691.3M582.9 555V617.3M582.9 620.8V691.3M589.5 555V617.3M589.5 620.8V691.3M596.2 555V617.3M596.2 620.8V691.3M602.9 555V617.3M602.9 620.8V691.3M800.2 555V617.3M800.2 620.8V691.3M806.9 555V617.3M806.9 620.8V691.3M813.6 555V617.3M813.6 620.8V691.3M820.2 555V617.3M820.2 620.8V691.3M826.9 555V617.3M826.9 620.8V691.3M833.6 555V617.3M833.6 620.8V691.3M840.2 555V617.3M840.2 620.8V691.3M846.9 555V617.3M846.9 620.8V691.3M853.6 555V617.3M853.6 620.8V691.3M1106.3 555V617.3M1106.3 620.8V691.3M1113 555V617.3M1113 620.8V691.3M1119.6 555V617.3M1119.6 620.8V691.3M1126.3 555V617.3M1126.3 620.8V691.3M1133 555V617.3M1133 620.8V691.3M1139.7 555V617.3M1139.7 620.8V691.3M1146.3 555V617.3M1146.3 620.8V691.3M1153 555V617.3M1153 620.8V691.3M1159.7 555V617.3M1159.7 620.8V691.3" fill="none" stroke="#141414" stroke-width="1.35" /><path d="M245.8 550V583M245.8 586.6V652.3M245.8 655.4V696.3M252.4 550V583M252.4 586.6V652.3M252.4 655.4V696.3M259.1 550V583M259.1 586.6V652.3M259.1 655.4V696.3M265.8 550V583M265.8 586.6V652.3M265.8 655.4V696.3M272.4 550V583M272.4 586.6V652.3M272.4 655.4V696.3M279.1 550V583M279.1 586.6V652.3M279.1 655.4V696.3M285.8 550V583M285.8 586.6V652.3M285.8 655.4V696.3M292.5 550V583M292.5 586.6V652.3M292.5 655.4V696.3M552.6 550V583M552.6 586.6V652.3M552.6 655.4V696.3M559.3 550V583M559.3 586.6V652.3M559.3 655.4V696.3M566 550V583M566 586.6V652.3M566 655.4V696.3M572.7 550V583M572.7 586.6V652.3M572.7 655.4V696.3M579.4 550V583M579.4 586.6V652.3M579.4 655.4V696.3M586 550V583M586 586.6V652.3M586 655.4V696.3M592.7 550V583M592.7 586.6V652.3M592.7 655.4V696.3M599.4 550V583M599.4 586.6V652.3M599.4 655.4V696.3M803.4 550V583M803.4 586.6V652.3M803.4 655.4V696.3M810 550V583M810 586.6V652.3M810 655.4V696.3M816.7 550V583M816.7 586.6V652.3M816.7 655.4V696.3M823.4 550V583M823.4 586.6V652.3M823.4 655.4V696.3M830.1 550V583M830.1 586.6V652.3M830.1 655.4V696.3M836.7 550V583M836.7 586.6V652.3M836.7 655.4V696.3M843.4 550V583M843.4 586.6V652.3M843.4 655.4V696.3M850.1 550V583M850.1 586.6V652.3M850.1 655.4V696.3M1109.5 550V583M1109.5 586.6V652.3M1109.5 655.4V696.3M1116.1 550V583M1116.1 586.6V652.3M1116.1 655.4V696.3M1122.8 550V583M1122.8 586.6V652.3M1122.8 655.4V696.3M1129.5 550V583M1129.5 586.6V652.3M1129.5 655.4V696.3M1136.2 550V583M1136.2 586.6V652.3M1136.2 655.4V696.3M1142.8 550V583M1142.8 586.6V652.3M1142.8 655.4V696.3M1149.5 550V583M1149.5 586.6V652.3M1149.5 655.4V696.3M1156.2 550V583M1156.2 586.6V652.3M1156.2 655.4V696.3" fill="none" stroke="#141414" stroke-width="2.1" /><g font-family="Liberation Sans, sans-serif" font-size="16.5" font-weight="bold" stroke="#e5423a" stroke-width="0.5" fill="#e5423a"><text transform="translate(703.8 556.2) rotate(180)" text-anchor="middle" y="5.8">4</text><text transform="translate(703.8 595.7) rotate(180)" text-anchor="middle" y="5.8">3</text><text transform="translate(703.8 638.2) rotate(180)" text-anchor="middle" y="5.8">2</text><text transform="translate(703.8 684) rotate(180)" text-anchor="middle" y="5.8">1</text></g><text class="cj" transform="translate(684 666.6) rotate(180)" x="0" y="0" font-size="10.3" font-weight="bold" fill="#e5423a">此面朝下</text><path d="M768.8 671 H774.3 V680.2 H776.9 L771.5 689.2 L766.1 680.2 H768.8 Z" fill="none" stroke="#e5423a" stroke-width="1.5" /><rect x="130.4" y="190.6" width="10.4" height="10.3" fill="#00f000" stroke="#5bd05b" stroke-width="0.5"/><text x="253" y="527.5" font-size="34" font-weight="bold" font-style="italic" fill="#ffa90f" style="font-family:'Liberation Serif','Noto Serif CJK SC',serif">重庆</text></svg></div>
<div id="rp1" class="a"><svg class="a" style="left:0;top:0" width="226" height="384" viewBox="1374 41 226 384"><rect x="1430.6" y="49.5" width="17.2" height="13.3" rx="1.3" fill="none" stroke="#0a7dc9" stroke-width="2.4"/><circle cx="1434.6" cy="53" r="1.3" fill="#0a7dc9"/><path d="M1431.8 60.8 L1437.4 56 L1439.8 58.4 L1446.8 51.6" fill="none" stroke="#0a7dc9" stroke-width="1.7"/><rect x="1422.4" y="68.5" width="33.6" height="2.5" fill="#0a7dc9"/><path d="M1522 52.8 Q1522 50.6 1524.2 50.6 H1526.2 L1527.8 48.4 H1535 L1536.6 50.6 H1538.6 Q1540.8 50.6 1540.8 52.8 V62.2 Q1540.8 64.4 1538.6 64.4 H1524.2 Q1522 64.4 1522 62.2 Z" fill="none" stroke="#9b9b9b" stroke-width="2"/><circle cx="1531.4" cy="57.3" r="2.1" fill="none" stroke="#9b9b9b" stroke-width="1.6"/><rect x="1380.7" y="89.5" width="83.6" height="21.8" rx="4" fill="#fff" stroke="#8c8c8c" stroke-width="1"/><rect x="1470" y="89.5" width="92.6" height="21.8" rx="4" fill="#fff" stroke="#8c8c8c" stroke-width="1"/><path d="M1453.3 99.7 H1459.9 L1456.6 103.5 Z M1550.8 99.7 H1557.4 L1554.1 103.5 Z" fill="#111"/><circle cx="1578.6" cy="100.8" r="5" fill="none" stroke="#9b9b9b" stroke-width="1.9"/><path d="M1582.3 104.6 L1586 108.4" stroke="#9b9b9b" stroke-width="2.1" stroke-linecap="round"/><rect x="1591.6" y="117" width="4" height="125.5" rx="2" fill="#d2d2d2"/><path d="M1387.5 133.2 H1414.8 V120 L1441.7 146.8 L1414.8 173.6 V160.4 H1387.5 Z" fill="none" stroke="#444" stroke-width="0.95" stroke-linejoin="miter"/><path d="M1455.6 133.2 H1496.5 L1510 146.7 L1496.5 160.2 H1455.6 Z" fill="none" stroke="#444" stroke-width="0.95" stroke-linejoin="miter"/><path d="M1523.5 130.2 H1564.3 L1577.8 146.8 L1564.3 163.4 H1523.5 L1537 146.8 Z" fill="none" stroke="#444" stroke-width="0.95" stroke-linejoin="miter"/><circle cx="1415" cy="226.4" r="27.4" fill="none" stroke="#444" stroke-width="0.95" stroke-linejoin="miter"/><circle cx="1415" cy="226.4" r="16.4" fill="none" stroke="#444" stroke-width="0.95" stroke-linejoin="miter"/><path d="M1469.3 199.6 H1496.4 V212.5 H1510 V240.3 H1496.4 V253.5 H1469.3 V240.3 H1455.6 V212.5 H1469.3 Z" fill="none" stroke="#444" stroke-width="0.95" stroke-linejoin="miter"/><path d="M1550.6 199.5 l10.5 10.8 h-5.6 v11.2 h11.4 v-5.6 l11 10.6 l-11 10.6 v-5.6 h-11.4 v11.2 h5.6 l-10.5 10.8 l-10.5 -10.8 h5.6 v-11.2 h-11.4 v5.6 l-11 -10.6 l11 -10.6 v5.6 h11.4 v-11.2 h-5.6 Z" fill="none" stroke="#444" stroke-width="0.95" stroke-linejoin="miter"/><path d="M1387.4 305.9 L1398.4 295 V300.6 H1431.6 V295 L1442.6 305.9 L1431.6 316.8 V311.2 H1398.4 V316.8 Z" fill="none" stroke="#444" stroke-width="0.95" stroke-linejoin="miter"/><path d="M1482.8 280.4 L1489.2 300.2 L1510.0 300.2 L1493.2 312.4 L1499.6 332.1 L1482.8 319.9 L1466.0 332.1 L1472.4 312.4 L1455.6 300.2 L1476.4 300.2 Z" fill="none" stroke="#444" stroke-width="0.95" stroke-linejoin="miter"/><path d="M1550.7 330.4 C1541 321 1523.2 310 1523.2 295.5 C1523.2 286.5 1530 280.9 1537.3 280.9 C1543.5 280.9 1548.5 284.3 1550.7 289.2 C1552.9 284.3 1557.9 280.9 1564.1 280.9 C1571.4 280.9 1578.2 286.5 1578.2 295.5 C1578.2 310 1560.4 321 1550.7 330.4 Z" fill="none" stroke="#444" stroke-width="0.95" stroke-linejoin="miter"/><path d="M1442.2 386.9 L1442.0 384.1 L1441.5 381.3 L1440.7 378.6 L1439.7 376.0 L1438.4 373.6 L1436.9 371.2 L1435.2 369.1 L1433.3 367.1 L1431.2 365.3 L1428.9 363.7 L1426.6 362.4 L1424.1 361.3 L1421.5 360.5 L1418.9 359.9 L1416.2 359.6 L1413.5 359.5 L1410.9 359.7 L1408.3 360.1 L1405.7 360.8 L1403.3 361.8 L1400.9 363.0 L1398.7 364.3 L1396.6 365.9 L1394.7 367.7 L1393.0 369.7 L1391.5 371.8 L1390.3 374.0 L1389.2 376.3 L1388.4 378.7 L1387.8 381.2 L1387.5 383.7 L1387.4 386.3 L1387.5 388.8 L1387.9 391.2 L1388.6 393.6 L1389.4 396.0 L1390.5 398.2 L1391.8 400.3 L1393.3 402.2 L1395.0 404.0 L1396.8 405.7 L1398.7 407.1 L1400.8 408.3 L1403.0 409.3 L1405.3 410.1 L1407.6 410.7 L1409.9 411.0 L1412.3 411.1 L1414.6 411.0 L1417.0 410.6 L1419.2 410.1 L1421.4 409.3 L1423.5 408.3 L1425.5 407.1 L1427.3 405.7 L1429.0 404.2 L1430.6 402.5 L1431.9 400.7 L1433.1 398.7 L1434.1 396.7 L1434.8 394.6 L1435.4 392.4 L1435.7 390.2 L1435.8 388.0 L1435.7 385.8 L1435.4 383.7 L1434.9 381.5 L1434.2 379.5 L1433.3 377.5 L1432.2 375.7 L1430.9 373.9 L1429.5 372.3 L1427.9 370.9 L1426.3 369.6 L1424.5 368.5 L1422.6 367.6 L1420.6 366.9 L1418.6 366.3 L1416.6 366.0 L1414.5 365.9 L1412.5 365.9 L1410.5 366.2 L1408.5 366.7 L1406.6 367.3 L1404.7 368.2 L1403.0 369.2 L1401.4 370.3 L1399.9 371.6 L1398.5 373.0 L1397.3 374.6 L1396.3 376.3 L1395.4 378.0 L1394.7 379.8 L1394.2 381.6 L1393.9 383.5 L1393.8 385.4 L1393.8 387.3 L1394.1 389.2 L1394.5 391.0 L1395.1 392.8 L1395.8 394.5 L1396.7 396.1 L1397.8 397.6 L1399.0 399.0 L1400.3 400.2 L1401.7 401.4 L1403.2 402.3 L1404.8 403.1 L1406.5 403.8 L1408.2 404.3 L1409.9 404.6 L1411.6 404.7 L1413.4 404.7 L1415.1 404.5 L1416.8 404.1 L1418.4 403.6 L1420.0 402.9 L1421.4 402.1 L1422.8 401.2 L1424.1 400.1 L1425.3 398.9 L1426.3 397.6 L1427.2 396.2 L1427.9 394.8 L1428.5 393.3 L1429.0 391.7 L1429.3 390.1 L1429.4 388.5 L1429.4 387.0 L1429.2 385.4 L1428.9 383.9 L1428.4 382.4 L1427.8 380.9 L1427.1 379.6 L1426.2 378.3 L1425.3 377.2 L1424.2 376.1 L1423.0 375.2 L1421.8 374.3 L1420.5 373.7 L1419.1 373.1 L1417.7 372.7 L1416.3 372.4 L1414.9 372.3 L1413.4 372.3 L1412.0 372.4 L1410.6 372.7 L1409.3 373.1 L1408.0 373.7 L1406.8 374.3 L1405.7 375.1 L1404.6 376.0 L1403.6 376.9 L1402.8 378.0 L1402.1 379.1 L1401.4 380.2 L1400.9 381.5 L1400.6 382.7 L1400.3 384.0 L1400.2 385.3 L1400.2 386.5 L1400.3 387.8 L1400.5 389.0 L1400.9 390.2 L1401.4 391.4 L1402.0 392.4 L1402.6 393.5 L1403.4 394.4 L1404.3 395.2 L1405.2 396.0 L1406.2 396.7 L1407.2 397.2 L1408.3 397.7 L1409.4 398.0 L1410.5 398.2 L1411.6 398.3 L1412.7 398.3 L1413.8 398.2 L1414.9 398.0 L1416.0 397.7 L1417.0 397.3 L1417.9 396.8 L1418.8 396.2 L1419.6 395.5 L1420.4 394.8 L1421.0 394.0 L1421.6 393.1 L1422.1 392.2 L1422.5 391.3 L1422.8 390.3 L1422.9 389.4 L1423.0 388.4 L1423.0 387.4 L1422.9 386.5 L1422.8 385.5 L1422.5 384.6 L1422.1 383.8 L1421.7 383.0 L1421.2 382.2 L1420.6 381.5 L1420.0 380.9 L1419.3 380.3 L1418.6 379.8 L1417.8 379.4 L1417.0 379.1 L1416.2 378.9 L1415.4 378.7 L1414.6 378.6 L1413.7 378.7 L1412.9 378.7 L1412.2 378.9 L1411.4 379.1 L1410.7 379.4 L1410.0 379.8 L1409.4 380.2 L1408.8 380.7 L1408.3 381.2 L1407.9 381.8 L1407.5 382.4 L1407.1 383.1 L1406.9 383.7 L1406.7 384.4 L1406.6 385.0 L1406.5 385.7 L1406.5 386.4 L1406.6 387.0 L1406.8 387.7 L1407.0 388.3 L1407.2 388.8 L1407.5 389.4 L1407.9 389.8 L1408.3 390.3 L1408.7 390.7 L1409.2 391.0 L1409.6 391.3 L1410.1 391.6 L1410.7 391.8 L1411.2 391.9 L1411.7 392.0 L1412.2 392.0 L1412.7 392.0 L1413.2 391.9 L1413.7 391.8 L1414.2 391.6 L1414.6 391.4 L1415.0 391.1 L1415.3 390.9 L1415.6 390.6 L1415.9 390.2 L1416.2 389.9 L1416.4 389.5 L1416.5 389.1 L1416.6 388.7 L1416.7 388.4 L1416.7 388.0 L1416.7 387.6 L1416.7 387.3 L1416.6 386.9 L1416.5 386.6 L1416.4 386.3" fill="none" stroke="#444" stroke-width="0.95" stroke-linejoin="miter"/><path d="M1482.8 358.3 L1489.6 373.5 L1506.2 371.8 L1496.4 385.3 L1506.2 398.8 L1489.6 397.1 L1482.8 412.3 L1476.0 397.1 L1459.4 398.8 L1469.2 385.3 L1459.4 371.8 L1476.0 373.5 Z" fill="none" stroke="#444" stroke-width="0.95" stroke-linejoin="miter"/><path d="M1541.2 361 H1577.8 L1559.6 409.2 H1523.2 Z" fill="none" stroke="#444" stroke-width="0.95" stroke-linejoin="miter"/></svg><svg class="t" role="img" aria-label="1.基础图案" style="left:9.60px;top:53.20px" width="60.47" height="15.73" ><title>1.基础图案</title><text x="0" y="12.1" font-size="12.1" font-weight="bold" fill="#111">1.基础图案</text></svg><svg class="t" role="img" aria-label="1.基本图形" style="left:99.40px;top:53.20px" width="60.47" height="15.73" ><title>1.基本图形</title><text x="0" y="12.1" font-size="12.1" font-weight="bold" fill="#111">1.基本图形</text></svg><svg class="t" role="img" aria-label="箭头" style="left:31.80px;top:140.70px" width="19.40" height="11.96" ><title>箭头</title><text x="0" y="9.2" font-size="9.2" font-weight="bold" fill="#222">箭头</text></svg><svg class="t" role="img" aria-label="箭头1" style="left:96.89px;top:140.70px" width="24.83" height="11.96" ><title>箭头1</title><text x="0" y="9.2" font-size="9.2" font-weight="bold" fill="#222">箭头1</text></svg><svg class="t" role="img" aria-label="箭头2" style="left:164.69px;top:140.70px" width="24.83" height="11.96" ><title>箭头2</title><text x="0" y="9.2" font-size="9.2" font-weight="bold" fill="#222">箭头2</text></svg><svg class="t" role="img" aria-label="同心圆" style="left:27.20px;top:220.90px" width="28.60" height="11.96" ><title>同心圆</title><text x="0" y="9.2" font-size="9.2" font-weight="bold" fill="#222">同心圆</text></svg><svg class="t" role="img" aria-label="十字" style="left:99.60px;top:220.90px" width="19.40" height="11.96" ><title>十字</title><text x="0" y="9.2" font-size="9.2" font-weight="bold" fill="#222">十字</text></svg><svg class="t" role="img" aria-label="十字箭头" style="left:158.20px;top:220.90px" width="37.80" height="11.96" ><title>十字箭头</title><text x="0" y="9.2" font-size="9.2" font-weight="bold" fill="#222">十字箭头</text></svg><svg class="t" role="img" aria-label="双箭头" style="left:27.20px;top:299.80px" width="28.60" height="11.96" ><title>双箭头</title><text x="0" y="9.2" font-size="9.2" font-weight="bold" fill="#222">双箭头</text></svg><svg class="t" role="img" aria-label="五角星" style="left:95.00px;top:299.80px" width="28.60" height="11.96" ><title>五角星</title><text x="0" y="9.2" font-size="9.2" font-weight="bold" fill="#222">五角星</text></svg><svg class="t" role="img" aria-label="心形" style="left:167.40px;top:299.80px" width="19.40" height="11.96" ><title>心形</title><text x="0" y="9.2" font-size="9.2" font-weight="bold" fill="#222">心形</text></svg></div>
<div id="rp2" class="a"><div class="a" style="left:7px;top:9px;width:219px;height:34px;background:#0a7dc9;border-radius:3px 0 0 0"></div><svg class="t" role="img" aria-label="加工工艺" style="left:11.00px;top:19.00px" width="49.80" height="15.86" ><title>加工工艺</title><text x="0" y="12.2" font-size="12.2" font-weight="500" fill="#fff">加工工艺</text></svg><svg class="t" role="img" aria-label="速度" style="left:83.00px;top:19.00px" width="25.40" height="15.86" ><title>速度</title><text x="0" y="12.2" font-size="12.2" font-weight="500" fill="#fff">速度</text></svg><svg class="t" role="img" aria-label="功率" style="left:138.10px;top:19.00px" width="25.40" height="15.86" ><title>功率</title><text x="0" y="12.2" font-size="12.2" font-weight="500" fill="#fff">功率</text></svg><svg class="t" role="img" aria-label="输出" style="left:188.40px;top:19.00px" width="25.40" height="15.86" ><title>输出</title><text x="0" y="12.2" font-size="12.2" font-weight="500" fill="#fff">输出</text></svg><div class="a" style="left:7px;top:43px;width:219px;height:33px;background:#ebebeb"></div><div class="a" style="left:9.1px;top:52.4px;width:15px;height:14.5px;background:#ffa90f;border-radius:1.5px"></div><svg class="t" role="img" aria-label="浅雕" style="left:32.40px;top:52.00px" width="25.40" height="15.86" ><title>浅雕</title><text x="0" y="12.2" font-size="12.2" font-weight="500" fill="#111">浅雕</text></svg><div class="a num" style="left:65.7px;top:52.2px;width:60px;color:#777">500.0</div><div class="a num" style="left:120.5px;top:52.2px;width:60px;color:#777">20.0</div><svg class="a" style="left:190.6px;top:52.7px" width="19" height="13.4" viewBox="0 0 17 12" ><path d="M1 6 Q8.5 -3.2 16 6 Q8.5 15.2 1 6 Z" fill="none" stroke="#111" stroke-width="1.25"/><circle cx="8.5" cy="6" r="3.6" fill="none" stroke="#111" stroke-width="1.25"/><circle cx="8.5" cy="6" r="1.9" fill="none" stroke="#111" stroke-width="0.9"/></svg><div class="a" style="left:9.1px;top:85.9px;width:15px;height:14.5px;background:#e0443c;border-radius:1.5px"></div><svg class="t" role="img" aria-label="描线" style="left:32.40px;top:85.50px" width="25.40" height="15.86" ><title>描线</title><text x="0" y="12.2" font-size="12.2" font-weight="500" fill="#111">描线</text></svg><div class="a num" style="left:65.7px;top:85.7px;width:60px;font-weight:bold;color:#111">100.0</div><div class="a num" style="left:120.5px;top:85.7px;width:60px;font-weight:bold;color:#111">15.0</div><svg class="a" style="left:190.6px;top:86.2px" width="19" height="13.4" viewBox="0 0 17 12" ><path d="M1 6 Q8.5 -3.2 16 6 Q8.5 15.2 1 6 Z" fill="none" stroke="#111" stroke-width="1.25"/><circle cx="8.5" cy="6" r="3.6" fill="none" stroke="#111" stroke-width="1.25"/><circle cx="8.5" cy="6" r="1.9" fill="none" stroke="#111" stroke-width="0.9"/></svg><div class="a" style="left:9.1px;top:119.4px;width:15px;height:14.5px;background:#000;border-radius:1.5px"></div><svg class="t" role="img" aria-label="切割" style="left:32.40px;top:119.00px" width="25.40" height="15.86" ><title>切割</title><text x="0" y="12.2" font-size="12.2" font-weight="500" fill="#111">切割</text></svg><div class="a num" style="left:65.7px;top:119.2px;width:60px;font-weight:bold;color:#111">40.0</div><div class="a num" style="left:120.5px;top:119.2px;width:60px;font-weight:bold;color:#111">99.0</div><svg class="a" style="left:190.6px;top:119.7px" width="19" height="13.4" viewBox="0 0 17 12" ><path d="M1 6 Q8.5 -3.2 16 6 Q8.5 15.2 1 6 Z" fill="none" stroke="#111" stroke-width="1.25"/><circle cx="8.5" cy="6" r="3.6" fill="none" stroke="#111" stroke-width="1.25"/><circle cx="8.5" cy="6" r="1.9" fill="none" stroke="#111" stroke-width="0.9"/></svg><div class="a" style="left:57.8px;top:237.3px;width:107px;height:107px;border-radius:50%;border:3.2px solid #0a7dc9;background:#fff"></div><div class="a" style="left:64.6px;top:244.1px;width:93.4px;height:93.4px;border-radius:50%;background:#0a7dc9"></div><svg class="t" role="img" aria-label="开始" style="left:86.20px;top:276.60px" width="50.20" height="31.98" ><title>开始</title><text x="0" y="24.6" font-size="24.6" font-weight="500" fill="#fff">开始</text></svg><div class="a" style="left:7.1px;top:362.8px;width:217.4px;height:24.6px;border:1px solid #cfcfcf;background:#fff"></div><div class="a" style="left:168.4px;top:363.8px;width:56px;height:22.6px;background:#dcdcdc"></div><svg class="a" style="left:61.4px;top:369.2px" width="13" height="13" viewBox="0 0 13 13" ><circle cx="6.5" cy="6.5" r="5.4" fill="none" stroke="#ee8a3a" stroke-width="1.2"/><path d="M4.2 4.2 L8.8 8.8 M8.8 4.2 L4.2 8.8" stroke="#ee8a3a" stroke-width="1.2"/></svg><svg class="t" role="img" aria-label="未连接" style="left:80.00px;top:367.90px" width="37.90" height="15.99" ><title>未连接</title><text x="0" y="12.3" font-size="12.3" fill="#ee8a3a">未连接</text></svg><svg class="t" role="img" aria-label="切换" style="left:182.70px;top:367.90px" width="25.60" height="15.99" ><title>切换</title><text x="0" y="12.3" font-size="12.3" font-weight="500" fill="#111">切换</text></svg></div>
<svg id="perf" class="a" style="left:1150px;top:8px" width="170" height="95" viewBox="1150 8 170 95"><defs><linearGradient id="pg" x1="0" y1="0" x2="1" y2="1"><stop offset="0" stop-color="#000" stop-opacity="0.25"/><stop offset="1" stop-color="#000" stop-opacity="0"/></linearGradient><filter id="sh" x="-20%" y="-20%" width="140%" height="150%"><feGaussianBlur stdDeviation="2.2"/></filter></defs><g filter="url(#sh)" opacity="0.35"><rect x="1200" y="31" width="108" height="52" rx="26" fill="#000"/><circle cx="1196" cy="57" r="37" fill="#000"/></g><rect x="1200" y="28.3" width="108.2" height="52" rx="26" fill="#33363f"/><path d="M1232 54.2 H1306" stroke="#3f434d" stroke-width="1"/><circle cx="1196" cy="54.5" r="37.1" fill="#3d414e"/><circle cx="1196" cy="54.5" r="35.4" fill="#565a68"/><clipPath id="capc"><rect x="1150" y="8" width="170" height="23"/></clipPath><circle cx="1196" cy="54.4" r="36.8" fill="#2a6fb0" opacity="0.4" clip-path="url(#capc)"/><path d="M1195.96 22.00 A32.6 32.6 0 0 1 1200.62 22.29" fill="none" stroke="rgb(65,217,190)" stroke-width="2.3"/><path d="M1199.95 22.20 A32.6 32.6 0 0 1 1204.54 23.06" fill="none" stroke="rgb(67,217,188)" stroke-width="2.3"/><path d="M1203.88 22.89 A32.6 32.6 0 0 1 1208.33 24.30" fill="none" stroke="rgb(69,218,185)" stroke-width="2.3"/><path d="M1207.70 24.06 A32.6 32.6 0 0 1 1211.95 26.00" fill="none" stroke="rgb(71,218,182)" stroke-width="2.3"/><path d="M1211.34 25.68 A32.6 32.6 0 0 1 1215.32 28.13" fill="none" stroke="rgb(73,218,180)" stroke-width="2.3"/><path d="M1214.76 27.73 A32.6 32.6 0 0 1 1218.42 30.65" fill="none" stroke="rgb(75,219,177)" stroke-width="2.3"/><path d="M1217.91 30.19 A32.6 32.6 0 0 1 1221.18 33.53" fill="none" stroke="rgb(78,219,174)" stroke-width="2.3"/><path d="M1220.73 33.02 A32.6 32.6 0 0 1 1223.57 36.73" fill="none" stroke="rgb(80,220,172)" stroke-width="2.3"/><path d="M1223.19 36.16 A32.6 32.6 0 0 1 1225.55 40.20" fill="none" stroke="rgb(82,220,169)" stroke-width="2.3"/><path d="M1225.24 39.59 A32.6 32.6 0 0 1 1227.09 43.88" fill="none" stroke="rgb(84,220,166)" stroke-width="2.3"/><path d="M1226.86 43.24 A32.6 32.6 0 0 1 1228.17 47.72" fill="none" stroke="rgb(86,221,164)" stroke-width="2.3"/><path d="M1228.02 47.06 A32.6 32.6 0 0 1 1228.77 51.67" fill="none" stroke="rgb(88,221,161)" stroke-width="2.3"/><path d="M1228.70 50.99 A32.6 32.6 0 0 1 1228.88 55.66" fill="none" stroke="rgb(93,221,156)" stroke-width="2.3"/><path d="M1228.90 54.98 A32.6 32.6 0 0 1 1228.51 59.63" fill="none" stroke="rgb(101,221,148)" stroke-width="2.3"/><path d="M1228.61 58.96 A32.6 32.6 0 0 1 1227.65 63.53" fill="none" stroke="rgb(108,221,141)" stroke-width="2.3"/><path d="M1227.83 62.87 A32.6 32.6 0 0 1 1226.33 67.30" fill="none" stroke="rgb(116,221,133)" stroke-width="2.3"/><path d="M1226.59 66.66 A32.6 32.6 0 0 1 1224.55 70.87" fill="none" stroke="rgb(123,220,126)" stroke-width="2.3"/><path d="M1224.88 70.28 A32.6 32.6 0 0 1 1222.35 74.20" fill="none" stroke="rgb(131,220,118)" stroke-width="2.3"/><path d="M1222.75 73.65 A32.6 32.6 0 0 1 1219.76 77.24" fill="none" stroke="rgb(138,220,111)" stroke-width="2.3"/><path d="M1220.23 76.74 A32.6 32.6 0 0 1 1216.82 79.93" fill="none" stroke="rgb(146,220,103)" stroke-width="2.3"/><path d="M1217.34 79.50 A32.6 32.6 0 0 1 1213.57 82.25" fill="none" stroke="rgb(155,219,97)" stroke-width="2.3"/><path d="M1214.14 81.88 A32.6 32.6 0 0 1 1210.06 84.16" fill="none" stroke="rgb(167,217,92)" stroke-width="2.3"/><path d="M1210.67 83.86 A32.6 32.6 0 0 1 1206.34 85.61" fill="none" stroke="rgb(178,216,87)" stroke-width="2.3"/><path d="M1206.99 85.40 A32.6 32.6 0 0 1 1202.48 86.61" fill="none" stroke="rgb(189,215,82)" stroke-width="2.3"/><path d="M1203.14 86.47 A32.6 32.6 0 0 1 1198.52 87.12" fill="none" stroke="rgb(201,213,77)" stroke-width="2.3"/><path d="M1199.20 87.07 A32.6 32.6 0 0 1 1194.53 87.15" fill="none" stroke="rgb(212,212,72)" stroke-width="2.3"/><path d="M1195.21 87.18 A32.6 32.6 0 0 1 1190.56 86.69" fill="none" stroke="rgb(224,210,67)" stroke-width="2.3"/><path d="M1191.23 86.80 A32.6 32.6 0 0 1 1186.68 85.75" fill="none" stroke="rgb(232,208,64)" stroke-width="2.3"/><path d="M1187.34 85.94 A32.6 32.6 0 0 1 1182.95 84.34" fill="none" stroke="rgb(233,202,64)" stroke-width="2.3"/><path d="M1183.57 84.61 A32.6 32.6 0 0 1 1179.41 82.48" fill="none" stroke="rgb(234,196,64)" stroke-width="2.3"/><path d="M1180.00 82.83 A32.6 32.6 0 0 1 1176.13 80.21" fill="none" stroke="rgb(235,190,64)" stroke-width="2.3"/><path d="M1176.67 80.63 A32.6 32.6 0 0 1 1173.15 77.55" fill="none" stroke="rgb(237,184,64)" stroke-width="2.3"/><path d="M1173.64 78.03 A32.6 32.6 0 0 1 1170.52 74.55" fill="none" stroke="rgb(238,178,64)" stroke-width="2.3"/><path d="M1170.94 75.09 A32.6 32.6 0 0 1 1168.27 71.25" fill="none" stroke="rgb(239,172,64)" stroke-width="2.3"/><path d="M1168.63 71.84 A32.6 32.6 0 0 1 1166.45 67.70" fill="none" stroke="rgb(240,167,64)" stroke-width="2.3"/><path d="M1166.73 68.33 A32.6 32.6 0 0 1 1165.07 63.96" fill="none" stroke="rgb(240,162,64)" stroke-width="2.3"/><path d="M1165.27 64.61 A32.6 32.6 0 0 1 1164.16 60.07" fill="none" stroke="rgb(240,157,64)" stroke-width="2.3"/><path d="M1164.28 60.74 A32.6 32.6 0 0 1 1163.73 56.10" fill="none" stroke="rgb(240,152,64)" stroke-width="2.3"/><path d="M1163.77 56.78 A32.6 32.6 0 0 1 1163.80 52.11" fill="none" stroke="rgb(240,147,64)" stroke-width="2.3"/><path d="M1163.75 52.79 A32.6 32.6 0 0 1 1164.34 48.16" fill="none" stroke="rgb(240,142,64)" stroke-width="2.3"/><text x="1174.5" y="64.3" font-family="Liberation Sans, sans-serif" font-size="29.5" fill="#fff">78</text><text x="1209.6" y="64.3" font-family="Liberation Sans, sans-serif" font-size="11.5" fill="#fff">%</text><path d="M1241.3 37.2 L1245.6 41.8 H1242.6 V45 H1240 V41.8 H1237 Z" fill="#4db8f0"/><path d="M1241.3 71 L1245.6 66.4 H1242.6 V63.2 H1240 V66.4 H1237 Z" fill="#2fc042"/><g font-family="Liberation Sans, sans-serif" fill="#fff"><text x="1269.6" y="45.8" font-size="12.5" font-weight="bold">0</text><text x="1278.6" y="45.8" font-size="11" fill="#dcdcdc">K/s</text><text x="1269.6" y="72.4" font-size="12.5" font-weight="bold">0</text><text x="1278.6" y="72.4" font-size="11" fill="#dcdcdc">K/s</text></g></svg>
</body></html>
